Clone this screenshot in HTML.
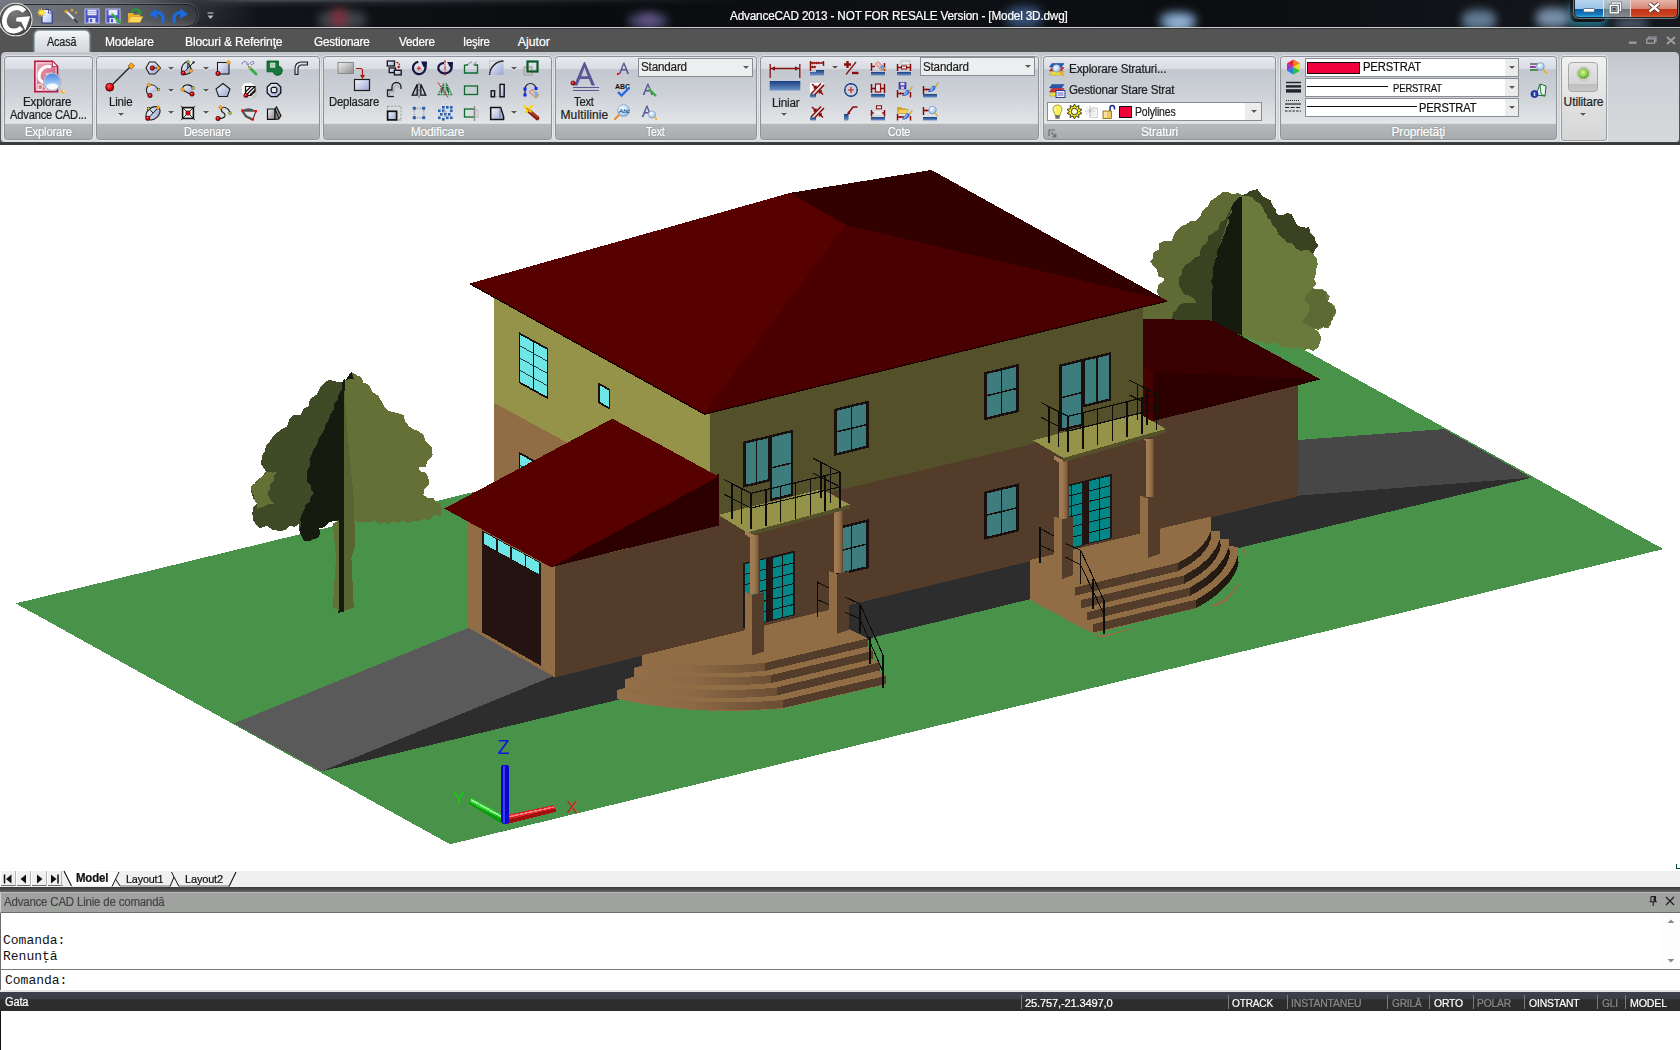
<!DOCTYPE html><html lang="ro"><head><meta charset="utf-8"><title>AdvanceCAD 2013 - NOT FOR RESALE Version - [Model 3D.dwg]</title><style>
*{box-sizing:border-box}
html,body{margin:0;padding:0}
body{width:1680px;height:1050px;overflow:hidden;position:relative;background:#fff;font-family:"Liberation Sans",sans-serif;font-size:12px;color:#1e1e1e}
.abs{position:absolute}
#titlebar{left:0;top:0;width:1680px;height:28px;background:linear-gradient(90deg,#1c1f24 0,#121419 14%,#0a0b0e 35%,#0e1014 55%,#0b0d10 70%,#14181d 100%)}
#titleline{left:0;top:26.6px;width:1680px;height:2px;background:linear-gradient(#b8bcc0,#d8d8d8 50%,#3a3a3a 55%,#3a3a3a)}
#title{left:0;top:8px;width:1798px;text-align:center;color:#fff;font-size:12.3px;white-space:nowrap}
#tabrow{left:0;top:28.5px;width:1680px;height:114px;background:#545454}
.tab{position:absolute;top:36px;color:#fff;font-size:12.2px;white-space:nowrap}
#acttab{left:35px;top:30.5px;width:53.5px;height:22px;border-radius:4px 4px 0 0;background:linear-gradient(#f4f6f8,#e2e5e8 45%,#d3d7db);box-shadow:0 0 2px 1px rgba(200,240,250,.75)}
#ribbon{left:1.2px;top:52px;width:1677.5px;height:89.8px;background:linear-gradient(#c3c7cb,#cdd1d5 30%,#d6d9dc);border-radius:4.5px 4.5px 3px 3px}
#ribline{left:0;top:141.8px;width:1680px;height:3.4px;background:linear-gradient(#4a4a4a,#333 60%,#3e3e3e)}
.panel{position:absolute;top:56px;height:84px;border-radius:3.5px;border:1px solid #8e9297;box-shadow:0 0 0 1px rgba(255,255,255,.45);background:linear-gradient(#e6e9ee 0,#d9dde3 14.2%,#c3c8d0 15.4%,#cdd1d7 45%,#dcdfe2 70%,#e3e5e6 81%,#b6b9bc 81.5%,#a9acaf 100%);overflow:hidden}
.pcap{position:absolute;left:0;right:0;bottom:0;height:15px;line-height:16.5px;text-align:center;color:#fff;font-size:12px;text-shadow:0 0 1px rgba(90,90,90,.6)}
.lbl{position:absolute;white-space:nowrap;font-size:12px;color:#1e1e1e;text-align:center}
.ic{position:absolute;overflow:visible}
.tx{position:absolute;white-space:nowrap;line-height:1.24;transform-origin:0 50%;-webkit-text-stroke:.22px currentColor}
.combo{position:absolute;height:19px;border:1px solid #8a8e94;background:#eceef0;font-size:11.5px;line-height:17px;padding-left:2px;white-space:nowrap}
.combo.w{background:#fff}
.dd{position:absolute;width:0;height:0;border-left:3px solid transparent;border-right:3px solid transparent;border-top:3.5px solid #585858;filter:drop-shadow(0 1px 0 rgba(255,255,255,.9))}
#laytabs{left:0;top:871px;width:1680px;height:17px;background:#f0f0f0}
#darkline{left:0;top:886.8px;width:1680px;height:5.4px;background:linear-gradient(#3a3a3a,#4e4e4e 60%,#6a6a6a)}
#cmdtitle{left:0;top:892px;width:1680px;height:21px;background:#a0a2a0;border-top:1px solid #b8bab8;border-bottom:1px solid #6c6c6c;border-left:1.5px solid #d0d0d0;color:#3a3a3a;font-size:11.4px;line-height:19px;padding-left:4px}
#cmdhist{left:0;top:913px;width:1680px;height:56.5px;background:#fff;border-left:1.5px solid #6c6c6c;border-bottom:1px solid #7a7a7a;font-family:"Liberation Mono",monospace;font-size:13px;color:#111}
#cmdline{left:0;top:969.5px;width:1680px;height:20.5px;background:#fff;border-left:1.5px solid #6c6c6c;font-family:"Liberation Mono",monospace;font-size:13px;color:#111}
#cmdgap{left:0;top:989.7px;width:1680px;height:2.3px;background:#e4e4e4}
#status{left:0;top:991.7px;width:1680px;height:19px;background:linear-gradient(#3e414c,#3a3d46 36%,#2e2e2e 40%,#2c2c2c 100%);color:#fff;font-size:11.4px}
.st{position:absolute;top:3px;white-space:nowrap}
.sep{position:absolute;top:3px;width:1px;height:14px;background:#7a7a7a}
#below{left:0;top:1010.5px;width:1680px;height:40px;background:#fff;border-left:1.5px solid #111}
</style></head><body>
<div id="titlebar" class="abs"></div>
<div class="abs" style="left:0;top:0;width:760px;height:8px;background:linear-gradient(rgba(125,132,145,.6) 0,rgba(90,96,106,.3) 3px,rgba(40,44,50,0) 8px);-webkit-mask-image:linear-gradient(90deg,#000 0,#000 25%,transparent 100%);mask-image:linear-gradient(90deg,#000 0,#000 25%,transparent 100%)"></div>
<div class="abs" style="left:318px;top:10px;width:48px;height:20px;background:#6a6e78;opacity:0.55;filter:blur(5px);border-radius:40%"></div>
<div class="abs" style="left:332px;top:8px;width:14px;height:20px;background:#a02838;opacity:0.7;filter:blur(5px);border-radius:40%"></div>
<div class="abs" style="left:628px;top:13px;width:40px;height:16px;background:#6a6aa0;opacity:0.6;filter:blur(5px);border-radius:40%"></div>
<div class="abs" style="left:640px;top:14px;width:18px;height:12px;background:#8a6ab0;opacity:0.5;filter:blur(5px);border-radius:40%"></div>
<div class="abs" style="left:1006px;top:6px;width:36px;height:22px;background:#5a86c8;opacity:0.55;filter:blur(5px);border-radius:40%"></div>
<div class="abs" style="left:1160px;top:12px;width:36px;height:18px;background:#8ab4e4;opacity:0.8;filter:blur(5px);border-radius:40%"></div>
<div class="abs" style="left:1168px;top:18px;width:22px;height:12px;background:#b8d4f0;opacity:0.6;filter:blur(5px);border-radius:40%"></div>
<div class="abs" style="left:1462px;top:10px;width:34px;height:20px;background:#86a8cc;opacity:0.7;filter:blur(5px);border-radius:40%"></div>
<div class="abs" style="left:1536px;top:8px;width:34px;height:20px;background:#9ab8dc;opacity:0.75;filter:blur(5px);border-radius:40%"></div>
<div class="abs" style="left:1614px;top:19px;width:34px;height:9px;background:#9ab8dc;opacity:0.5;filter:blur(5px);border-radius:40%"></div>
<div class="abs" style="left:0;top:0;width:260px;height:27px;background:linear-gradient(90deg,#6a7077 0,#5c6168 35%,#474b51 55%,#2a2c31 75%,rgba(20,22,26,0) 100%)"></div>
<div class="abs" style="left:0;top:0;width:260px;height:27px;background:linear-gradient(rgba(255,255,255,.08),rgba(0,0,0,.12));-webkit-mask-image:linear-gradient(90deg,#000 0,#000 60%,transparent 100%);mask-image:linear-gradient(90deg,#000 0,#000 60%,transparent 100%)"></div>
<div class="abs" style="left:20px;top:4.8px;width:176.5px;height:21.4px;border-radius:0 10.7px 10.7px 0;background:linear-gradient(rgba(255,255,255,.02),rgba(255,255,255,.10) 70%,rgba(255,255,255,.2));box-shadow:0 0 0 1px rgba(24,26,30,.85), 0 0 0 2px rgba(150,158,168,.28)"></div>
<svg class="ic" style="left:38.0px;top:7.5px" width="16" height="16" viewBox="0 0 16 16"><path d="M4,1.5 H10.5 L14.2,5 V15 H4 Z" fill="url(#gnew)" stroke="#32328a" stroke-width="1.1"/><path d="M10.5,1.5 V5 H14.2" fill="#eef2fc" stroke="#32328a" stroke-width=".8"/><path d="M3.5,0 L4.3,2.4 L6.8,1.2 L5.6,3.6 L8,4.5 L5.6,5.3 L6.6,7.8 L4.3,6.5 L3.4,9 L2.6,6.5 L0.2,7.6 L1.4,5.2 L-1,4.4 L1.5,3.6 L0.4,1.2 L2.8,2.4 Z" fill="#ffe838" stroke="#e8a800" stroke-width=".3"/></svg>
<svg class="ic" style="left:62.5px;top:7.5px" width="16" height="16" viewBox="0 0 16 16"><path d="M4,4 L14,14" stroke="#e8e8e8" stroke-width="2.2" stroke-linecap="round"/><path d="M11.5,11.5 L14,14" stroke="#3c3c3c" stroke-width="2.4" stroke-linecap="round"/><path d="M3,1 l.7,1.8 l1.8,.7 l-1.8,.7 l-.7,1.8 l-.7,-1.8 l-1.8,-.7 l1.8,-.7 z M9,0 l.6,1.5 l1.5,.6 l-1.5,.6 l-.6,1.5 l-.6,-1.5 l-1.5,-.6 l1.5,-.6 z M13,3 l.5,1.3 l1.3,.5 l-1.3,.5 l-.5,1.3 l-.5,-1.3 l-1.3,-.5 l1.3,-.5 z" fill="#f8a820"/></svg>
<svg class="ic" style="left:84.0px;top:7.5px" width="16" height="16" viewBox="0 0 16 16"><rect x="1" y="1" width="14" height="14" fill="#4a52c8" stroke="#c8ccf4" stroke-width=".9"/><rect x="3.5" y="1.8" width="9" height="5.5" fill="#e8e8f8"/><path d="M4,3.5 H12 M4,5.3 H12" stroke="#9aa0d8" stroke-width=".7"/><rect x="4.5" y="10" width="7" height="5" fill="#dcdcf0"/><rect x="6" y="11" width="2" height="3.2" fill="#4a52c8"/></svg>
<svg class="ic" style="left:105.0px;top:7.5px" width="16" height="16" viewBox="0 0 16 16"><rect x="1" y="1" width="14" height="14" fill="#4a52c8" stroke="#c8ccf4" stroke-width=".9"/><rect x="3.5" y="1.8" width="9" height="5.5" fill="#e8e8f8"/><rect x="4.5" y="10" width="7" height="5" fill="#dcdcf0"/><rect x="6" y="11" width="2" height="3.2" fill="#4a52c8"/><path d="M7,6 L15,14.5" stroke="#2fae3c" stroke-width="2.4" stroke-linecap="round"/><path d="M6,5 l2,.5 l-1.4,1.4 z" fill="#e8c890"/></svg>
<svg class="ic" style="left:126.5px;top:7.5px" width="16" height="16" viewBox="0 0 16 16"><path d="M1,5 H6 L7,6.5 H13 V14 H1 Z" fill="#e8b030"/><path d="M3.5,8.5 H16 L13,14.5 H1 Z" fill="#f8d860" stroke="#c89018" stroke-width=".5"/><path d="M5,4.5 C6,0.5 11,0 12.5,3.5" fill="none" stroke="#2a9a3a" stroke-width="2"/><path d="M10,4 L15,2.5 L13.5,7.5 Z" fill="#2a9a3a"/></svg>
<svg class="ic" style="left:149.0px;top:7.5px" width="16" height="16" viewBox="0 0 16 16"><path d="M13,15 C16,8 12,3.5 6,5" fill="none" stroke="#1a6ae0" stroke-width="3.2"/><path d="M0,6.5 L7.5,0.5 L8,10.5 Z" fill="#1a6ae0"/></svg>
<svg class="ic" style="left:171.5px;top:7.5px" width="16" height="16" viewBox="0 0 16 16"><path d="M3,15 C0,8 4,3.5 10,5" fill="none" stroke="#1a6ae0" stroke-width="3.2"/><path d="M16,6.5 L8.5,0.5 L8,10.5 Z" fill="#1a6ae0"/></svg>
<svg class="ic" style="left:206.5px;top:11.5px" width="7" height="8" viewBox="0 0 7 8"><path d="M0.5,1 H6.5" stroke="#b8bcc4" stroke-width="1.2"/><path d="M0.5,3.5 H6.5 L3.5,7 Z" fill="#b8bcc4"/></svg>
<div class="abs" style="left:1574px;top:-1px;width:104px;height:19px;border-radius:0 0 5px 5px;border:1px solid #1a2430;box-shadow:0 0 0 1px rgba(220,230,240,.45);overflow:hidden"><div class="abs" style="left:0;top:0;width:28px;height:18px;background:linear-gradient(#b4d4ee,#9cc4e6 48%,#0a5ea4 52%,#1878c0 80%,#28c8e8)"></div><div class="abs" style="left:28px;top:0;width:26.5px;height:18px;background:linear-gradient(#c4c8cc,#a8acb0 48%,#70747a 52%,#8a8e94);border-left:1px solid #dce4ec"></div><div class="abs" style="left:54.5px;top:0;width:50px;height:18px;background:linear-gradient(#e8b4a8,#d88878 48%,#c43418 52%,#c8401e 80%,#d86838);border-left:1px solid #f0d0c8"></div></div>
<div class="abs" style="left:1570px;top:0;width:36px;height:22px;box-shadow:0 4px 7px 1px rgba(60,200,240,.55);border-radius:0 0 6px 6px;opacity:.9"></div>
<svg class="ic" style="left:1583.0px;top:8.0px" width="12" height="5" viewBox="0 0 12 5"><rect x=".5" y=".5" width="11" height="3.6" rx=".8" fill="#fff" stroke="#4a5a6a" stroke-width=".8"/></svg>
<svg class="ic" style="left:1609.0px;top:2.0px" width="13" height="12" viewBox="0 0 13 12"><rect x="3.5" y="1" width="8" height="7.5" fill="none" stroke="#4a4e54" stroke-width="2.6"/><rect x="3.5" y="1" width="8" height="7.5" fill="none" stroke="#fff" stroke-width="1.5"/><rect x="1.2" y="3.3" width="8" height="7.5" fill="#9a9ea4" stroke="#4a4e54" stroke-width="2.6"/><rect x="1.2" y="3.3" width="8" height="7.5" fill="none" stroke="#fff" stroke-width="1.5"/><rect x="3.8" y="6" width="2.8" height="2.4" fill="#4a4e54"/></svg>
<svg class="ic" style="left:1648.0px;top:2.0px" width="13" height="11" viewBox="0 0 13 11"><path d="M1.5,1.5 L11,9.5 M11,1.5 L1.5,9.5" stroke="#4a2a24" stroke-width="4.2"/><path d="M1.5,1.5 L11,9.5 M11,1.5 L1.5,9.5" stroke="#fff" stroke-width="2.4"/></svg>
<div class="tx" style="left:730.0px;top:8.5px;font-size:12.3px;color:#fff;letter-spacing:-0.18px;transform:scaleX(0.9562);">AdvanceCAD 2013 - NOT FOR RESALE Version - [Model 3D.dwg]</div>
<div id="titleline" class="abs"></div>
<div id="tabrow" class="abs"></div>
<div id="acttab" class="abs"></div>
<div class="tx" style="left:46.7px;top:35.1px;font-size:12.3px;color:#1e1e1e;letter-spacing:-0.18px;transform:scaleX(0.8803);">Acasă</div>
<div class="tx" style="left:105.3px;top:35.1px;font-size:12.3px;color:#fff;letter-spacing:-0.18px;transform:scaleX(0.9773);">Modelare</div>
<div class="tx" style="left:185.3px;top:35.1px;font-size:12.3px;color:#fff;letter-spacing:-0.18px;transform:scaleX(0.9827);">Blocuri &amp; Referinţe</div>
<div class="tx" style="left:314.3px;top:35.1px;font-size:12.3px;color:#fff;letter-spacing:-0.18px;transform:scaleX(0.9544);">Gestionare</div>
<div class="tx" style="left:399.0px;top:35.1px;font-size:12.3px;color:#fff;letter-spacing:-0.18px;transform:scaleX(0.9419);">Vedere</div>
<div class="tx" style="left:463.0px;top:35.1px;font-size:12.3px;color:#fff;letter-spacing:-0.18px;transform:scaleX(0.9208);">Ieşire</div>
<div class="tx" style="left:517.7px;top:35.1px;font-size:12.3px;color:#fff;letter-spacing:0.03px;">Ajutor</div>
<svg class="ic" style="left:1628.5px;top:41.0px" width="8" height="4" viewBox="0 0 8 4"><rect x="0" y=".6" width="7.5" height="2.2" fill="#9aa0a8"/></svg>
<svg class="ic" style="left:1646.0px;top:35.5px" width="11" height="8" viewBox="0 0 11 8"><path d="M2.5,2.8 V1 H10 V5.2 H8.6" fill="none" stroke="#9aa0a8" stroke-width="1.2"/><rect x=".8" y="2.8" width="7.8" height="4.4" fill="none" stroke="#9aa0a8" stroke-width="1.3"/></svg>
<svg class="ic" style="left:1665.5px;top:35.5px" width="10" height="9" viewBox="0 0 10 9"><path d="M1,1 L9,8 M9,1 L1,8" stroke="#9aa0a8" stroke-width="2"/></svg>
<div id="ribbon" class="abs"></div>
<div id="ribline" class="abs"></div>
<svg width="0" height="0" style="position:absolute"><defs>
<linearGradient id="gb" x1="0" y1="0" x2="1" y2="1"><stop offset="0" stop-color="#f6f8fd"/><stop offset="1" stop-color="#98a4d2"/></linearGradient>
<linearGradient id="gbv" x1="0" y1="0" x2="0" y2="1"><stop offset="0" stop-color="#f0f3fb"/><stop offset="1" stop-color="#9ca8d6"/></linearGradient>
<linearGradient id="gdim" x1="0" y1="0" x2="0" y2="1"><stop offset="0" stop-color="#173f80"/><stop offset="1" stop-color="#6d93c6"/></linearGradient>
<linearGradient id="ggray" x1="0" y1="0" x2="1" y2="1"><stop offset="0" stop-color="#f2f2f2"/><stop offset="1" stop-color="#8a8a8a"/></linearGradient>
<radialGradient id="gred" cx=".4" cy=".35" r=".7"><stop offset="0" stop-color="#ff5a5a"/><stop offset=".6" stop-color="#e00010"/><stop offset="1" stop-color="#8a0000"/></radialGradient>
<linearGradient id="gnew" x1="0" y1="0" x2="1" y2="1"><stop offset="0" stop-color="#fff"/><stop offset="1" stop-color="#a8c4ec"/></linearGradient><linearGradient id="gpg" x1="0" y1="0" x2="1" y2="1"><stop offset="0" stop-color="#eeb8c6"/><stop offset=".5" stop-color="#d87890"/><stop offset="1" stop-color="#c4486a"/></linearGradient><linearGradient id="glens2" x1="0" y1="0" x2="0" y2="1"><stop offset="0" stop-color="#4a84e4"/><stop offset=".5" stop-color="#8cbcf4"/><stop offset="1" stop-color="#e8f2fe"/></linearGradient><radialGradient id="gapp" cx=".45" cy=".25" r=".85"><stop offset="0" stop-color="#7a7a7a"/><stop offset=".55" stop-color="#5c5c5c"/><stop offset="1" stop-color="#3c3c3c"/></radialGradient>
<radialGradient id="gled" cx=".45" cy=".4" r=".6"><stop offset="0" stop-color="#d8f5a0"/><stop offset=".6" stop-color="#8fd04a"/><stop offset="1" stop-color="#5a9a2a"/></radialGradient>
<radialGradient id="glens" cx=".4" cy=".35" r=".7"><stop offset="0" stop-color="#fff"/><stop offset=".7" stop-color="#a8d0f4"/><stop offset="1" stop-color="#5a94d8"/></radialGradient>
</defs></svg>
<div class="panel" style="left:4px;width:89px"></div><div class="tx" style="left:24.8px;top:125.4px;font-size:12px;color:#fff;letter-spacing:-0.18px;transform:scaleX(0.9450);text-shadow:0 0 1.5px rgba(80,80,80,.55);">Explorare</div>
<div class="panel" style="left:96px;width:224px"></div><div class="tx" style="left:184.3px;top:125.4px;font-size:12px;color:#fff;letter-spacing:-0.18px;transform:scaleX(0.9232);text-shadow:0 0 1.5px rgba(80,80,80,.55);">Desenare</div>
<div class="panel" style="left:323px;width:228.5px"></div><div class="tx" style="left:410.7px;top:125.4px;font-size:12px;color:#fff;letter-spacing:-0.17px;transform:scaleX(1.0000);text-shadow:0 0 1.5px rgba(80,80,80,.55);">Modificare</div>
<div class="panel" style="left:555px;width:202px"></div><div class="tx" style="left:645.7px;top:125.4px;font-size:12px;color:#fff;letter-spacing:-0.18px;transform:scaleX(0.8738);text-shadow:0 0 1.5px rgba(80,80,80,.55);">Text</div>
<div class="panel" style="left:760px;width:278.5px"></div><div class="tx" style="left:888.0px;top:125.4px;font-size:12px;color:#fff;letter-spacing:-0.18px;transform:scaleX(0.8934);text-shadow:0 0 1.5px rgba(80,80,80,.55);">Cote</div>
<div class="panel" style="left:1042.5px;width:233.5px"></div><div class="tx" style="left:1140.6px;top:125.4px;font-size:12px;color:#fff;letter-spacing:-0.18px;transform:scaleX(0.9937);text-shadow:0 0 1.5px rgba(80,80,80,.55);">Straturi</div>
<div class="panel" style="left:1279.5px;width:277.5px"></div><div class="tx" style="left:1391.4px;top:125.4px;font-size:12px;color:#fff;letter-spacing:-0.10px;transform:scaleX(1.0000);text-shadow:0 0 1.5px rgba(80,80,80,.55);">Proprietăţi</div>
<div class="abs" style="left:1561px;top:55.5px;width:45.5px;height:85px;border:1px solid #9a9ea3;border-radius:3px;background:linear-gradient(#f2f2f2,#e2e2e2 50%,#d6d6d6);box-shadow:0 0 0 1px rgba(255,255,255,.5)"></div>
<div class="abs" style="left:1567.5px;top:61.5px;width:30.5px;height:30px;border:1px solid #a8a8a8;border-radius:4px;background:linear-gradient(#e8e8e8,#d4d4d4 74%,#bebebe 75%,#c8c8c8)"></div>
<svg class="ic" style="left:1575.5px;top:65.5px" width="15" height="15" viewBox="0 0 15 15"><circle cx="7.5" cy="7.5" r="6.8" fill="#e8e8e8" stroke="#b4b4b4" stroke-width=".8"/><circle cx="7.5" cy="7.5" r="5.3" fill="url(#gled)" stroke="#6a9a3a" stroke-width=".5"/></svg>
<div class="tx" style="left:1563.6px;top:95.1px;font-size:12px;color:#1e1e1e;letter-spacing:-0.10px;transform:scaleX(1.0000);">Utilitare</div>
<div class="dd" style="left:1579.5px;top:113px"></div>
<svg class="ic" style="left:33.0px;top:59.5px" width="34" height="36" viewBox="0 0 34 36"><path d="M1.8,1.3 H19.5 L24.6,6.4 V31.8 H1.8 Z" fill="url(#gpg)" stroke="#b01c44" stroke-width="1.5"/><path d="M3.4,3 H19 L23,7 V30.2 H3.4 Z" fill="none" stroke="#fbe8ee" stroke-width=".8"/><path d="M19.5,1.3 V6.4 H24.6 Z" fill="#fff" stroke="#b01c44" stroke-width=".8"/><path d="M18,7 C12.5,5 6.5,9 6,15.5 C5.7,20 8.5,22.5 12,22.5" fill="none" stroke="#fff" stroke-width="3.2"/><path d="M12.5,13.8 L19,12.2 L16,20 Z" fill="#fff"/><text x="4" y="29.6" font-family="Liberation Sans,sans-serif" font-size="9" fill="#fff">DW</text><path d="M24.5,26.5 L29.5,31" stroke="#c0c4cc" stroke-width="2.6" stroke-linecap="round"/><circle cx="30.2" cy="31.6" r="1.9" fill="#f8a020"/><circle cx="30.8" cy="31" r=".9" fill="#fff"/><circle cx="19.3" cy="21.8" r="8.6" fill="url(#glens2)" stroke="#b4b8c4" stroke-width="1.3"/><ellipse cx="19.3" cy="26.3" rx="5.6" ry="3" fill="#fff" opacity=".85"/></svg>
<div class="tx" style="left:23.3px;top:95.4px;font-size:12px;color:#1e1e1e;letter-spacing:-0.18px;transform:scaleX(0.9732);">Explorare</div>
<div class="tx" style="left:10.0px;top:108.1px;font-size:12px;color:#1e1e1e;letter-spacing:-0.18px;transform:scaleX(0.9258);">Advance CAD...</div>
<svg class="ic" style="left:104.0px;top:61.0px" width="32" height="32" viewBox="0 0 32 32"><path d="M6,26 L27,5" stroke="#1c1c1c" stroke-width="1.2"/><circle cx="5.7" cy="26.2" r="4" fill="url(#gred)" stroke="#4a0000" stroke-width=".8"/><path d="M27.3,1.8 L30.5,5 L27.3,8.2 L24.1,5 Z" fill="#f7a824" stroke="#8a4a00" stroke-width=".7"/></svg>
<div class="tx" style="left:109.3px;top:95.3px;font-size:12px;color:#1e1e1e;letter-spacing:-0.18px;transform:scaleX(0.9570);">Linie</div>
<div class="dd" style="left:117.6px;top:113px"></div>
<svg class="ic" style="left:145.0px;top:60.2px" width="16" height="16" viewBox="0 0 16 16"><path d="M1,8 L4.4,2 H10 L15.5,8 L10,14 H4.4 Z" fill="url(#gb)" stroke="#1c1c1c" stroke-width="1.1"/><path d="M7,8 H13" stroke="#1c1c1c" stroke-width="1"/><rect x="5.3" y="6.0" width="4.0" height="4.0" rx="1.4" fill="url(#gred)" stroke="#3a0000" stroke-width=".8"/><path d="M13.3,6 l2,2 l-2,2 l-2,-2 z" fill="#f7a824" stroke="#a05a00" stroke-width=".4"/></svg>
<svg class="ic" style="left:179.5px;top:60.2px" width="16" height="16" viewBox="0 0 16 16"><path d="M1.5,9.5 A9,9 0 0 1 7.5,1.5 L12,10.5 A9,9 0 0 1 5.5,14.5 L2.5,14 Z" fill="url(#gb)" stroke="#1c1c1c" stroke-width="1.1"/><path d="M8,2 L7.7,8 M13.3,2.5 L5.5,11" fill="none" stroke="#1c1c1c" stroke-width="1"/><rect x="6.9" y="0.8999999999999999" width="2.2" height="2.2" fill="#f4e61e" stroke="#222" stroke-width=".5"/><circle cx="13.6" cy="2.4" r="1.1" fill="#111"/><path d="M11,8.8 l2.2,2.2 l-2.2,2.2 l-2.2,-2.2 z" fill="#f7a824" stroke="#a05a00" stroke-width=".4"/><rect x="1.2" y="11.0" width="4.0" height="4.0" rx="1.4" fill="url(#gred)" stroke="#3a0000" stroke-width=".8"/></svg>
<svg class="ic" style="left:215.0px;top:60.2px" width="16" height="16" viewBox="0 0 16 16"><rect x="2.5" y="2.5" width="11.5" height="11.5" fill="url(#gb)" stroke="#1c1c1c" stroke-width="1.1"/><rect x="0.9999999999999998" y="11.5" width="4.0" height="4.0" rx="1.4" fill="url(#gred)" stroke="#3a0000" stroke-width=".8"/><path d="M13.5,0.2999999999999998 l2.2,2.2 l-2.2,2.2 l-2.2,-2.2 z" fill="#f7a824" stroke="#a05a00" stroke-width=".4"/></svg>
<svg class="ic" style="left:241.0px;top:60.2px" width="16" height="16" viewBox="0 0 16 16"><path d="M1,4.3 C1.5,1.5 4,1 5.5,2 C7,3 4.5,4.8 6.5,4.6 C9,4.2 10,1 12.5,1.8 C14,2.4 12.5,4.8 10,4.6" fill="none" stroke="#4c4ca4" stroke-width=".9" stroke-dasharray="2.2 .7"/><path d="M9.5,8.5 L15,14" stroke="#2fae3c" stroke-width="2.8" stroke-linecap="round"/><path d="M9.2,9 L10.6,7.6" stroke="#86d886" stroke-width="1"/><path d="M7,6 l3.2,1.2 l-2,2 z" fill="#e8c070" stroke="#8a6a30" stroke-width=".4"/><path d="M7,6 l1.2,.5 l-.7,.7 z" fill="#333"/></svg>
<svg class="ic" style="left:266.3px;top:60.2px" width="16" height="16" viewBox="0 0 16 16"><path d="M1,1 H12.5 V6.2 A4.6,4.6 0 1 1 7.2,11.8 H1 Z" fill="#16783a" stroke="#0a5a26" stroke-width=".9"/><rect x="4.6" y="3.2" width="4.2" height="4" fill="#a8c8b0" stroke="#d8ecd8" stroke-width=".9"/></svg>
<svg class="ic" style="left:293.0px;top:60.2px" width="16" height="16" viewBox="0 0 16 16"><path d="M2,14.5 V8 A6,6 0 0 1 8,2 H14.5 V5 H8.5 A3.5,3.5 0 0 0 5,8.5 V14.5 Z" fill="url(#gb)" stroke="#1c1c1c" stroke-width="1.1"/></svg>
<div class="dd" style="left:167.6px;top:66.7px"></div>
<div class="dd" style="left:202.5px;top:66.7px"></div>
<svg class="ic" style="left:145.0px;top:82.3px" width="16" height="16" viewBox="0 0 16 16"><path d="M3.5,13 A6.5,6.5 0 0 1 4,3 A8,8 0 0 1 13,7.5 L5,13 Z" fill="url(#gb)" stroke="none"/><path d="M3.5,13 A6.5,6.5 0 0 1 4,3 A8,8 0 0 1 13,7.5" fill="none" stroke="#1c1c1c" stroke-width="1.1"/><path d="M4,0.7999999999999998 l2.2,2.2 l-2.2,2.2 l-2.2,-2.2 z" fill="#f7a824" stroke="#a05a00" stroke-width=".4"/><rect x="12.4" y="6.4" width="2.2" height="2.2" fill="#f4e61e" stroke="#222" stroke-width=".5"/><rect x="3.0" y="11.5" width="4.0" height="4.0" rx="1.4" fill="url(#gred)" stroke="#3a0000" stroke-width=".8"/></svg>
<svg class="ic" style="left:179.5px;top:82.3px" width="16" height="16" viewBox="0 0 16 16"><path d="M2,7 A6,6 0 0 1 13,6 L12,12 Z" fill="url(#gb)" stroke="none"/><path d="M2,7 A6,6 0 0 1 13,6 M2.5,8 L11,12.5" fill="none" stroke="#1c1c1c" stroke-width="1.1"/><path d="M2.5,5.3 l2.2,2.2 l-2.2,2.2 l-2.2,-2.2 z" fill="#f7a824" stroke="#a05a00" stroke-width=".4"/><rect x="11.9" y="4.9" width="2.2" height="2.2" fill="#f4e61e" stroke="#222" stroke-width=".5"/><rect x="10.0" y="10.0" width="4.0" height="4.0" rx="1.4" fill="url(#gred)" stroke="#3a0000" stroke-width=".8"/></svg>
<svg class="ic" style="left:215.0px;top:82.3px" width="16" height="16" viewBox="0 0 16 16"><path d="M8,1.5 L15,7 L12.3,14.5 H3.7 L1,7 Z" fill="url(#gb)" stroke="#1c1c1c" stroke-width="1.1"/></svg>
<svg class="ic" style="left:241.0px;top:82.3px" width="16" height="16" viewBox="0 0 16 16"><path d="M6,15.5 H16 V5 L13,5 V12 Z" fill="#c4c4c4"/><path d="M1,4 L4,1 H11 L14,4 V11 L11,14.5 H4 L1,11 Z" fill="#f8f8f8"/><path d="M4.5,4.5 H14 V9.5 L10,13.5 H4.5 Z" fill="#fff" stroke="#111" stroke-width="1.2"/><path d="M5,9.5 L10,4.5 M5.5,12.8 L13.5,4.8 M9,13 L14,8" stroke="#111" stroke-width="1.3"/><rect x="3.0" y="11.3" width="4.0" height="4.0" rx="1.4" fill="url(#gred)" stroke="#3a0000" stroke-width=".8"/></svg>
<svg class="ic" style="left:266.3px;top:82.3px" width="16" height="16" viewBox="0 0 16 16"><path d="M5,1.3 H11 L14.8,5 V11 L11,14.7 H5 L1.2,11 V5 Z" fill="url(#gb)" stroke="#111" stroke-width="1.3"/><path d="M6.3,5.3 H9.7 L10.8,6.4 V9.6 L9.7,10.7 H6.3 L5.2,9.6 V6.4 Z" fill="#e6e8ec" stroke="#111" stroke-width="1.2"/></svg>
<div class="dd" style="left:167.6px;top:88.8px"></div>
<div class="dd" style="left:202.5px;top:88.8px"></div>
<svg class="ic" style="left:145.0px;top:104.9px" width="16" height="16" viewBox="0 0 16 16"><ellipse cx="8" cy="8.3" rx="8" ry="5.6" transform="rotate(-40 8 8.3)" fill="url(#gb)" stroke="#1c1c1c" stroke-width="1.1"/><path d="M3,13.5 L13,3 M4,3.5 L8,8" stroke="#1c1c1c" stroke-width="1"/><rect x="2.6" y="2.6999999999999997" width="2.2" height="2.2" fill="#f4e61e" stroke="#222" stroke-width=".5"/><rect x="0.7999999999999996" y="11.3" width="4.0" height="4.0" rx="1.4" fill="url(#gred)" stroke="#3a0000" stroke-width=".8"/><path d="M13,0.3999999999999999 l2.2,2.2 l-2.2,2.2 l-2.2,-2.2 z" fill="#f7a824" stroke="#a05a00" stroke-width=".4"/></svg>
<svg class="ic" style="left:179.5px;top:104.9px" width="16" height="16" viewBox="0 0 16 16"><rect x="2.6" y="2.6" width="10.8" height="10.8" fill="#f6f6f6" stroke="#111" stroke-width="1.6"/><path d="M.8,.8 L15.2,15.2 M15.2,.8 L.8,15.2" stroke="#1c1c1c" stroke-width=".9"/><rect x="6" y="6" width="4" height="4" rx=".8" fill="#f0000c" stroke="#5a0000" stroke-width=".8"/></svg>
<svg class="ic" style="left:215.0px;top:104.9px" width="16" height="16" viewBox="0 0 16 16"><path d="M3,13.5 C10,14 12,10 8,7.5 C4.5,5 7,1.5 10,2.5 C13,3.5 14.5,5 15,8" fill="none" stroke="#1c1c1c" stroke-width="1.1"/><rect x="0.9999999999999998" y="11.5" width="4.0" height="4.0" rx="1.4" fill="url(#gred)" stroke="#3a0000" stroke-width=".8"/><path d="M5.5,0.2999999999999998 l2.2,2.2 l-2.2,2.2 l-2.2,-2.2 z" fill="#f7a824" stroke="#a05a00" stroke-width=".4"/><rect x="13.9" y="6.9" width="2.2" height="2.2" fill="#f4e61e" stroke="#222" stroke-width=".5"/></svg>
<svg class="ic" style="left:241.0px;top:104.9px" width="16" height="16" viewBox="0 0 16 16"><g transform="translate(0,1.8)"><path d="M1,3.8 L8,1.2 L15,4.3 L11.8,12.5 Z" fill="#e2e2e2"/><path d="M1.5,3.5 Q8,-1 14.8,4 L13.5,5 H3 Z" fill="#505050"/><path d="M1.3,4 L5,9.5 L11.5,12.6" fill="none" stroke="#505050" stroke-width="2.2"/><path d="M14.8,4.5 L12,12.4" stroke="#1c1c1c" stroke-width="1"/><rect x=".2" y="2.5" width="2.4" height="2.4" fill="#f00"/><rect x="13.6" y="3.2" width="2.4" height="2.4" fill="#f00"/><rect x="10.6" y="11.4" width="2.4" height="2.4" fill="#f00"/></g></svg>
<svg class="ic" style="left:266.3px;top:104.9px" width="16" height="16" viewBox="0 0 16 16"><path d="M1.5,4 H9 V14.3 H1.5 Z" fill="url(#ggray)" stroke="#111" stroke-width="1.2"/><path d="M9,4 L10.5,1.8 L15,10.8 L12.5,14.3 H9 Z" fill="#8a8a8a" stroke="#111" stroke-width="1.1"/><path d="M9,4 L13,13.5" stroke="#111" stroke-width="1"/></svg>
<div class="dd" style="left:167.6px;top:111.4px"></div>
<div class="dd" style="left:202.5px;top:111.4px"></div>
<svg class="ic" style="left:336.0px;top:61.0px" width="36" height="32" viewBox="0 0 36 32"><rect x="2" y="1.5" width="15.5" height="11" fill="url(#ggray)" stroke="#8a8a8a" stroke-width="1"/><rect x="18.5" y="18.5" width="15" height="11" fill="url(#gb)" stroke="#1c1c1c" stroke-width="1.2"/><path d="M20,7.5 H24.5 Q26.5,7.5 26.5,9.5 V15" fill="none" stroke="#b01414" stroke-width="1.2"/><path d="M24,14 H29 L26.5,18 Z" fill="#b01414"/></svg>
<div class="tx" style="left:329.3px;top:95.3px;font-size:12px;color:#1e1e1e;letter-spacing:-0.18px;transform:scaleX(0.9421);">Deplasare</div>
<svg class="ic" style="left:385.6px;top:60.2px" width="16" height="16" viewBox="0 0 16 16"><rect x="1.3" y="1" width="7.2" height="5" fill="url(#gb)" stroke="#111" stroke-width="1.3"/><rect x="3.2" y="8" width="6.3" height="4.6" fill="url(#gb)" stroke="#111" stroke-width="1.3"/><rect x="8.4" y="10.3" width="6.8" height="4.6" fill="url(#gb)" stroke="#111" stroke-width="1.3"/><path d="M10.3,2.3 C13.5,2.8 14,5.5 13,7.3" fill="none" stroke="#c01414" stroke-width="1.2" stroke-dasharray="2 .7"/><path d="M10.8,6.2 L12.6,8.8 L14.4,6.3 Z" fill="#c01414"/></svg>
<svg class="ic" style="left:410.5px;top:60.2px" width="16" height="16" viewBox="0 0 16 16"><path d="M7.3,1.8 A6.2,6.2 0 1 0 14.3,7.4" stroke="#141446" stroke-width="2.2" fill="none"/><path d="M10,1.6 H16 L15.6,8.4 L12.6,7 Z" fill="#141446"/><path d="M5.8,8.2 H10 M7.9,6.2 V10.2" stroke="#d01818" stroke-width="1.1"/></svg>
<svg class="ic" style="left:436.6px;top:60.2px" width="16" height="16" viewBox="0 0 16 16"><path d="M7,2.8 A6.6,5.3 0 1 0 14.4,7.4" stroke="#141446" stroke-width="2.2" fill="none"/><path d="M10.2,2 H16 L15.6,8.4 L12.8,7 Z" fill="#141446"/><path d="M8,0 V16" stroke="#c01010" stroke-width="1.1" stroke-dasharray="3.2 1 1 1"/></svg>
<svg class="ic" style="left:462.6px;top:60.2px" width="16" height="16" viewBox="0 0 16 16"><path d="M1.5,5 V13 H14.5 V5 H11 M1.5,5 H5" stroke="#0c6a2c" stroke-width="1.3" fill="none"/><path d="M5,4.5 L9,1.5 M10,5 L13.5,2" stroke="#a0a0a0" stroke-width="1.2"/></svg>
<svg class="ic" style="left:489.0px;top:60.2px" width="16" height="16" viewBox="0 0 16 16"><path d="M0,15 A15,15 0 0 1 14.5,1 V15 Z" fill="url(#gb)"/><path d="M.5,15 A14.5,14.5 0 0 1 14.5,1" fill="none" stroke="#1c1c1c" stroke-width="1.4"/><path d="M.5,1 V14 M.5,1 H13" stroke="#9a9a9a" stroke-width=".8" stroke-dasharray="1 1"/></svg>
<svg class="ic" style="left:523.3px;top:60.2px" width="16" height="16" viewBox="0 0 16 16"><rect x="1" y="7" width="8" height="8" fill="#c8c8c8" stroke="#9a9a9a"/><rect x="4.5" y="1.5" width="10" height="10" fill="none" stroke="#0c5a28" stroke-width="2.2"/></svg>
<svg class="ic" style="left:385.6px;top:82.3px" width="16" height="16" viewBox="0 0 16 16"><path d="M1.5,14.5 V8 H6 V5 A4.5,4.5 0 0 1 15,5 V7" fill="none" stroke="#1c1c1c" stroke-width="1.3"/><path d="M3,14.5 H8 M3.5,13 V10 H8 V6 A2.5,2.5 0 0 1 13,6" fill="none" stroke="#a0a0a0" stroke-width="1"/><path d="M1.5,14.5 H8" stroke="#1c1c1c" stroke-width="1.3"/></svg>
<svg class="ic" style="left:410.5px;top:82.3px" width="16" height="16" viewBox="0 0 16 16"><path d="M6.2,2.2 V13.2 H1.2 Z" fill="url(#gb)" stroke="#111" stroke-width="1.3"/><path d="M9.8,2.2 V13.2 H14.8 Z" fill="url(#gb)" stroke="#111" stroke-width="1.3"/><path d="M8,.5 V15.8" stroke="#333" stroke-width=".8" stroke-dasharray="3.2 1 1 1"/></svg>
<svg class="ic" style="left:436.6px;top:82.3px" width="16" height="16" viewBox="0 0 16 16"><path d="M6.6,1.5 L7.2,12.8 H1.2 Z" fill="#dfe6f4" stroke="#0c6a2c" stroke-width="1.1" stroke-dasharray="1.2 .5"/><path d="M9.4,1.5 L8.8,12.8 H14.8 Z" fill="#dfe6f4" stroke="#0c6a2c" stroke-width="1.1" stroke-dasharray="1.2 .5"/><path d="M4.2,11.5 L6,5 M11.8,11.5 L10,5" stroke="#0c6a2c" stroke-width="1.6"/><path d="M1,.5 L11,15.5" stroke="#c01010" stroke-width="1" stroke-dasharray="2.5 .8"/></svg>
<svg class="ic" style="left:462.6px;top:82.3px" width="16" height="16" viewBox="0 0 16 16"><rect x="1.5" y="4" width="13" height="8.5" stroke="#0c6a2c" stroke-width="1.3" fill="none"/></svg>
<svg class="ic" style="left:489.0px;top:82.3px" width="16" height="16" viewBox="0 0 16 16"><rect x="2.2" y="8.8" width="3.4" height="6" fill="url(#gb)" stroke="#111" stroke-width="1.4"/><rect x="11" y="2.4" width="4.2" height="12.4" fill="url(#gb)" stroke="#111" stroke-width="1.4"/><path d="M7,7.5 L9.5,4.5 M7,14.5 H10" stroke="#a0a0a0" stroke-width=".9" stroke-dasharray="1 1"/></svg>
<svg class="ic" style="left:523.3px;top:82.3px" width="16" height="16" viewBox="0 0 16 16"><path d="M2,12 V7 A5.5,5.5 0 0 1 13,7" fill="none" stroke="#1c1c1c" stroke-width="1.2"/><rect x="0.5" y="5.5" width="3" height="3" fill="#1020f0"/><rect x="0.5" y="11.5" width="3" height="3" fill="#1020f0"/><rect x="11.5" y="5" width="3" height="3" fill="#1020f0"/><path d="M6,10 L9,7.5 L16,13 L13,16 Z" fill="#f4b8b0" stroke="#8a5a5a" stroke-width=".6"/><path d="M11,11.5 L14,9.5 L16,13 L13,16 Z" fill="#7ab0e8"/><path d="M13.5,15.5 L16,13" stroke="#e8b020" stroke-width="1.2"/></svg>
<svg class="ic" style="left:385.6px;top:104.9px" width="16" height="16" viewBox="0 0 16 16"><path d="M1.5,1.2 H15 V15" fill="none" stroke="#9a9a9a" stroke-width="1" stroke-dasharray="2.2 1.3"/><path d="M1.5,1.2 V6" stroke="#9a9a9a" stroke-dasharray="2.2 1.3"/><path d="M10.5,15 H15" stroke="#9a9a9a"/><rect x="1.6" y="6.3" width="9" height="8.6" fill="url(#gb)" stroke="#111" stroke-width="1.7"/></svg>
<svg class="ic" style="left:410.5px;top:104.9px" width="16" height="16" viewBox="0 0 16 16"><path d="M5.5,3.2 H10.5 M5.5,12.8 H10.5 M3.2,5.5 V10.5 M12.8,5.5 V10.5" fill="none" stroke="#8a9ab8" stroke-width="1" stroke-dasharray="2 1.2"/><rect x="1.8" y="1.8" width="3" height="3" fill="#2a5cac"/><rect x="1.8" y="11.2" width="3" height="3" fill="#2a5cac"/><rect x="11.2" y="1.8" width="3" height="3" fill="#2a5cac"/><rect x="11.2" y="11.2" width="3" height="3" fill="#2a5cac"/></svg>
<svg class="ic" style="left:436.6px;top:104.9px" width="16" height="16" viewBox="0 0 16 16"><rect x="5" y="1" width="2.6" height="2.6" fill="#2860b4"/><rect x="9" y="1" width="2.6" height="2.6" fill="#2860b4"/><rect x="13" y="1" width="2.6" height="2.6" fill="#2860b4"/><rect x="1" y="4.5" width="2.6" height="2.6" fill="#2860b4"/><rect x="5" y="4.5" width="2.6" height="2.6" fill="#2860b4"/><rect x="13" y="4.5" width="2.6" height="2.6" fill="#2860b4"/><rect x="3" y="8" width="2.6" height="2.6" fill="#2860b4"/><rect x="7" y="8" width="2.6" height="2.6" fill="#2860b4"/><rect x="11" y="8" width="2.6" height="2.6" fill="#2860b4"/><rect x="1" y="11.5" width="2.6" height="2.6" fill="#2860b4"/><rect x="9" y="11.5" width="2.6" height="2.6" fill="#2860b4"/><rect x="13" y="11.5" width="2.6" height="2.6" fill="#2860b4"/><rect x="5" y="13" width="2.6" height="2.6" fill="#2860b4"/><path d="M6,6 h4 l-2,2.5 z M6,12 h4 l-2,-2.5 z" fill="#a8b0bc"/></svg>
<svg class="ic" style="left:462.6px;top:104.9px" width="16" height="16" viewBox="0 0 16 16"><rect x="1.5" y="4" width="10" height="8" stroke="#0c6a2c" stroke-width="1.3" fill="none"/><path d="M11.5,1 V16" stroke="#8a8a8a" stroke-width="1.3"/><path d="M12,5 H15 V12 H12" fill="none" stroke="#b8b8b8"/></svg>
<svg class="ic" style="left:489.0px;top:104.9px" width="16" height="16" viewBox="0 0 16 16"><path d="M1.7,2.6 H11.6 L14.6,11.5 V14.4 H1.7 Z" fill="url(#gb)" stroke="#111" stroke-width="1.5"/><path d="M11,3 V14" stroke="#7a7a8a" stroke-width="1"/></svg>
<svg class="ic" style="left:523.3px;top:104.9px" width="16" height="16" viewBox="0 0 16 16"><path d="M6.5,6.5 L14.3,13.2" stroke="#8a1a0c" stroke-width="4.2" stroke-linecap="round"/><path d="M6.8,6 L14,12" stroke="#c84a38" stroke-width="1.3" stroke-linecap="round" stroke-dasharray="2 1"/><path d="M1,1 L7.5,6.5 M9,.8 L3,7" stroke="#f8dc00" stroke-width="2.2" stroke-linecap="round"/><path d="M3.5,3.2 L6.3,5.5" stroke="#f08000" stroke-width="1.6"/></svg>
<div class="dd" style="left:511.4px;top:67px"></div>
<div class="dd" style="left:511.4px;top:110.5px"></div>
<svg class="ic" style="left:569.0px;top:60.0px" width="32" height="32" viewBox="0 0 32 32"><path d="M16,2 L26,25.5 H22.6 L20,19 H11 L8.4,25.5 H5 L15,2 Z M12.2,16.2 H18.8 L15.5,7.5 Z" fill="#5a5696" fill-rule="evenodd"/><path d="M4,27.5 H30 M4,30.5 H30" stroke="#5a5696" stroke-width="1.1"/><circle cx="4" cy="23" r="2.1" fill="url(#gred)" stroke="#4a0000" stroke-width=".7"/></svg>
<div class="tx" style="left:574.2px;top:95.3px;font-size:12px;color:#1e1e1e;letter-spacing:-0.18px;transform:scaleX(0.9302);">Text</div>
<div class="tx" style="left:560.5px;top:108.3px;font-size:12px;color:#1e1e1e;letter-spacing:0.12px;">Multilinie</div>
<svg class="ic" style="left:614.5px;top:60.5px" width="16" height="16" viewBox="0 0 16 16"><g transform="translate(2,0) scale(.92)"><path d="M8,1.5 L13.2,14 H11.2 L9.8,10.4 H5.2 L3.8,14 H1.8 L7,1.5 Z M5.8,8.8 H9.2 L7.5,4.2 Z" fill="#5a5696" fill-rule="evenodd"/></g><circle cx="3" cy="13" r="1.2" fill="#f01010"/></svg>
<svg class="ic" style="left:614.5px;top:82.0px" width="16" height="16" viewBox="0 0 16 16"><text x="0" y="6.5" font-family="Liberation Sans,sans-serif" font-size="7" font-weight="bold" fill="#111">ABC</text><path d="M3,10 L6.5,13.5 L14.5,5.5" fill="none" stroke="#2a6ae0" stroke-width="2.4"/></svg>
<svg class="ic" style="left:614.0px;top:104.0px" width="16" height="16" viewBox="0 0 16 16"><circle cx="9.5" cy="6.5" r="6" fill="url(#glens)" stroke="#8aa8d0" stroke-width=".8"/><text x="5" y="8.8" font-family="Liberation Sans,sans-serif" font-size="6.2" font-style="italic" fill="#111">Abc</text><path d="M5,11 L1,15" stroke="#e8902a" stroke-width="2.2" stroke-linecap="round"/></svg>
<svg class="ic" style="left:640.5px;top:82.0px" width="16" height="16" viewBox="0 0 16 16"><g transform="translate(0,0) scale(.92)"><path d="M8,1.5 L13.2,14 H11.2 L9.8,10.4 H5.2 L3.8,14 H1.8 L7,1.5 Z M5.8,8.8 H9.2 L7.5,4.2 Z" fill="#5a5696" fill-rule="evenodd"/></g><path d="M8,7 L14.5,13.5" stroke="#2fae3c" stroke-width="2.2" stroke-linecap="round"/><path d="M7,6 l2,.6 l-1.3,1.3 z" fill="#e8c890"/></svg>
<svg class="ic" style="left:640.5px;top:104.0px" width="16" height="16" viewBox="0 0 16 16"><g transform="translate(-1,0) scale(.92)"><path d="M8,1.5 L13.2,14 H11.2 L9.8,10.4 H5.2 L3.8,14 H1.8 L7,1.5 Z M5.8,8.8 H9.2 L7.5,4.2 Z" fill="#5a5696" fill-rule="evenodd"/></g><circle cx="11" cy="10.5" r="3.6" fill="url(#glens)" stroke="#8aa8d0" stroke-width=".8"/><path d="M13.6,13.2 L15.5,15.2" stroke="#e8b030" stroke-width="1.6" stroke-linecap="round"/></svg>
<div class="combo" style="left:638px;top:57.5px;width:115px"></div>
<div class="tx" style="left:640.6px;top:60.3px;font-size:12px;color:#1e1e1e;letter-spacing:-0.18px;transform:scaleX(0.9712);">Standard</div>
<div class="dd" style="left:742.5px;top:65.5px"></div>
<svg class="ic" style="left:768.0px;top:62.0px" width="34" height="30" viewBox="0 0 34 30"><path d="M2.2,2 V16 M31.8,2 V16 M2.2,6.5 H31.8" stroke="#8a1010" stroke-width="1.3" fill="none"/><path d="M3,6.5 l4,-2.2 v4.4 z M31,6.5 l-4,-2.2 v4.4 z" fill="#8a1010"/><rect x="1.7" y="19" width="30.6" height="9.5" fill="url(#gdim)"/></svg>
<div class="tx" style="left:771.5px;top:95.6px;font-size:12px;color:#1e1e1e;letter-spacing:-0.18px;transform:scaleX(0.9728);">Liniar</div>
<div class="dd" style="left:781.2px;top:113px"></div>
<svg class="ic" style="left:808.6px;top:60.2px" width="16" height="16" viewBox="0 0 16 16"><path d="M1.5,1 V11 M14.5,1 V6 M1.5,3 H14.5 M1.5,7 H7" stroke="#880808" stroke-width="1.45" fill="none"/><path d="M3,3 h1 M5,3 h1 M7,3 h1 M9,3 h1 M3,7 h1 M5,7 h1" stroke="#8a1010" stroke-width="2.4" stroke-dasharray=".8 1.2"/><path d="M1,15.5 V12 H7 V10 H15 V15.5 Z" fill="url(#gdim)"/></svg>
<svg class="ic" style="left:842.6px;top:60.2px" width="16" height="16" viewBox="0 0 16 16"><path d="M1,4.5 H8 M4.5,1 V8" stroke="#8a1010" stroke-width="2.4"/><path d="M9,13 H15.5" stroke="#8a1010" stroke-width="2.4"/><path d="M3,14.5 L13,2" stroke="#8a1010" stroke-width="1.3"/></svg>
<svg class="ic" style="left:870.2px;top:60.2px" width="16" height="16" viewBox="0 0 16 16"><path d="M1.5,3 V11 M14.5,3 V11 M1.5,6.5 H5" stroke="#880808" stroke-width="1.45" fill="none"/><rect x="1" y="12" width="14" height="3.5" fill="url(#gdim)"/><path d="M5,4 L8,1.5 L15,8 L12,11 Z" fill="#f4b8b0" stroke="#8a5a5a" stroke-width=".5"/><path d="M10,6.5 L13,4.5 L15,8 L12,11 Z" fill="#6a9ae0"/><path d="M12.5,10.5 L15,8" stroke="#e8b020" stroke-width="1.2"/></svg>
<svg class="ic" style="left:895.6px;top:60.2px" width="16" height="16" viewBox="0 0 16 16"><rect x="5" y="1" width="9" height="3.5" fill="#e8e8e8" stroke="#b0b0b0" stroke-width=".8"/><path d="M1.5,4 V11 M14.5,4 V11 M1.5,7.5 H14.5" stroke="#880808" stroke-width="1.45" fill="none"/><rect x="5.5" y="6" width="5" height="3" fill="#e8e8e8" stroke="#8a1010"/><rect x="1" y="12" width="14" height="3.5" fill="url(#gdim)"/></svg>
<svg class="ic" style="left:808.6px;top:82.3px" width="16" height="16" viewBox="0 0 16 16"><path d="M1,1 H15 L5,11 H1 Z" fill="#fff"/><path d="M2,12 L12,1.5 M5.5,13 L15,3" stroke="#880808" stroke-width="1.45" fill="none"/><path d="M3,2 L7,6 M7,6 V3.5 M7,6 H4.5 M14,12.5 L10.5,9 M10.5,9 V11.5 M10.5,9 H13" stroke="#880808" stroke-width="1.45" fill="none"/><rect x="1" y="12.5" width="6" height="3" fill="url(#gdim)"/></svg>
<svg class="ic" style="left:842.6px;top:82.3px" width="16" height="16" viewBox="0 0 16 16"><circle cx="8" cy="8" r="6.3" fill="none" stroke="#143a8c" stroke-width="1.2"/><path d="M5,8 H11 M8,5 V11" stroke="#c01414" stroke-width="1.1"/><path d="M8,1 V3 M8,13 V15 M1,8 H3 M13,8 H15" stroke="#143a8c" stroke-width="1"/></svg>
<svg class="ic" style="left:870.2px;top:82.3px" width="16" height="16" viewBox="0 0 16 16"><path d="M1.5,2 V11 M14.5,2 V11 M1.5,6.5 H14.5" stroke="#880808" stroke-width="1.45" fill="none"/><rect x="5.5" y="2" width="5" height="8" fill="#e8e8e8" stroke="#8a1010" stroke-width="1.2"/><rect x="1" y="12" width="14" height="3.5" fill="url(#gdim)"/></svg>
<svg class="ic" style="left:895.6px;top:82.3px" width="16" height="16" viewBox="0 0 16 16"><rect x="3" y="0.5" width="7" height="6.5" fill="#4a4ac0" stroke="#2a2a80" stroke-width=".6"/><rect x="4.5" y=".8" width="4" height="2.4" fill="#e0e0f0"/><rect x="5" y="4.5" width="3" height="2.5" fill="#c8c8d8"/><path d="M1.5,8 V15.5 M14.5,10 V15.5 M1.5,11.5 H8" stroke="#880808" stroke-width="1.45" fill="none"/><path d="M3,11.5 l2,-1.3 v2.6 z" fill="#8a1010"/><g transform="translate(6.5,5)"><path d="M-.5,9 C.5,6.5 2,6.5 3,4.2 C4,2.6 6,2.4 7.2,3.6 C7.4,6 5.5,8 3.5,8.6 C2,9.1 .8,9.2 -.5,9 Z" fill="#3c68d4"/><path d="M1.5,7.6 C3,7 4.2,5.6 4.6,4" fill="none" stroke="#9cc0f4" stroke-width="1.1"/><path d="M6.4,3.6 L9.3,-.6 L9.9,.2 L7.4,4.4 Z" fill="#e8c030" stroke="#a07810" stroke-width=".3"/></g></svg>
<svg class="ic" style="left:921.7px;top:82.3px" width="16" height="16" viewBox="0 0 16 16"><path d="M1.5,4 V12 M1.5,7.5 H8" stroke="#880808" stroke-width="1.45" fill="none"/><path d="M3,7.5 l2,-1.3 v2.6 z" fill="#8a1010"/><rect x="1" y="12" width="14" height="3.5" fill="url(#gdim)"/><g transform="translate(6.5,1)"><path d="M-.5,9 C.5,6.5 2,6.5 3,4.2 C4,2.6 6,2.4 7.2,3.6 C7.4,6 5.5,8 3.5,8.6 C2,9.1 .8,9.2 -.5,9 Z" fill="#3c68d4"/><path d="M1.5,7.6 C3,7 4.2,5.6 4.6,4" fill="none" stroke="#9cc0f4" stroke-width="1.1"/><path d="M6.4,3.6 L9.3,-.6 L9.9,.2 L7.4,4.4 Z" fill="#e8c030" stroke="#a07810" stroke-width=".3"/></g></svg>
<svg class="ic" style="left:808.6px;top:104.9px" width="16" height="16" viewBox="0 0 16 16"><path d="M2,12 L12,1.5 M5.5,13 L15,3" stroke="#880808" stroke-width="1.45" fill="none"/><path d="M3,2 L7,6 M7,6 V3.5 M7,6 H4.5 M14,12.5 L10.5,9 M10.5,9 V11.5 M10.5,9 H13" stroke="#880808" stroke-width="1.45" fill="none"/><rect x="1" y="12.5" width="6" height="3" fill="url(#gdim)"/></svg>
<svg class="ic" style="left:842.6px;top:104.9px" width="16" height="16" viewBox="0 0 16 16"><path d="M14.5,2 H10 L5,8.5" stroke="#880808" stroke-width="1.45" fill="none"/><path d="M3.8,10 L5.2,6.2 L7.6,8.4 Z" fill="#8a1010"/><rect x="1" y="9" width="4.5" height="6.5" fill="url(#gdim)"/></svg>
<svg class="ic" style="left:870.2px;top:104.9px" width="16" height="16" viewBox="0 0 16 16"><rect x="6.5" y=".8" width="5" height="3" fill="#fff" stroke="#8a1010" stroke-width="1.1"/><path d="M1.5,5 V11.5 M14.5,5 V11.5 M1.5,8 H4 M12,8 H14.5" stroke="#880808" stroke-width="1.45" fill="none"/><rect x="4" y="5.5" width="8" height="5" fill="#e8e8e8" stroke="#c8c8c8" stroke-width=".6"/><rect x="1" y="12" width="14" height="3.5" fill="url(#gdim)"/></svg>
<svg class="ic" style="left:895.6px;top:104.9px" width="16" height="16" viewBox="0 0 16 16"><path d="M1,2 H5 L6,3.2 H10 V4.5 H3.5 L1.5,8 Z" fill="#d8a020"/><path d="M3.5,4.5 H12.5 L10,8.5 H1 Z" fill="#f8d458" stroke="#b88010" stroke-width=".5"/><path d="M1.5,9 V15.5 M14.5,11 V15.5 M1.5,12 H8" stroke="#880808" stroke-width="1.45" fill="none"/><path d="M3,12 l2,-1.3 v2.6 z" fill="#8a1010"/><g transform="translate(6.5,5.5)"><path d="M-.5,9 C.5,6.5 2,6.5 3,4.2 C4,2.6 6,2.4 7.2,3.6 C7.4,6 5.5,8 3.5,8.6 C2,9.1 .8,9.2 -.5,9 Z" fill="#3c68d4"/><path d="M1.5,7.6 C3,7 4.2,5.6 4.6,4" fill="none" stroke="#9cc0f4" stroke-width="1.1"/><path d="M6.4,3.6 L9.3,-.6 L9.9,.2 L7.4,4.4 Z" fill="#e8c030" stroke="#a07810" stroke-width=".3"/></g></svg>
<svg class="ic" style="left:921.7px;top:104.9px" width="16" height="16" viewBox="0 0 16 16"><path d="M1.5,2 V10 M1.5,5.5 H7" stroke="#880808" stroke-width="1.45" fill="none"/><path d="M3,5.5 l2,-1.3 v2.6 z" fill="#8a1010"/><rect x="1" y="12" width="14" height="3.5" fill="url(#gdim)"/><circle cx="10.5" cy="5" r="3.8" fill="url(#glens)" stroke="#7a9ac8" stroke-width=".8"/><path d="M13.2,8 L15.3,10.5" stroke="#e8b030" stroke-width="1.7" stroke-linecap="round"/></svg>
<div class="dd" style="left:831.5px;top:66px"></div>
<div class="combo" style="left:920px;top:57px;width:115px"></div>
<div class="tx" style="left:922.9px;top:59.9px;font-size:12px;color:#1e1e1e;letter-spacing:-0.18px;transform:scaleX(0.9670);">Standard</div>
<div class="dd" style="left:1024.5px;top:65px"></div>
<svg class="ic" style="left:1049.0px;top:60.5px" width="17" height="16" viewBox="0 0 17 16"><path d="M3,2.5 H15 L12.5,6 H.5 Z" fill="#2a5ab0" stroke="#163a80" stroke-width=".5"/><path d="M3,6.5 H15 L12.5,10 H.5 Z" fill="#d83030" stroke="#8a1414" stroke-width=".5"/><path d="M3,10.5 H15 L12.5,14 H.5 Z" fill="#f0e040" stroke="#a89a10" stroke-width=".5"/><circle cx="7.5" cy="7.5" r="3.8" fill="url(#glens)" stroke="#8aa8d0" stroke-width=".8"/><path d="M10.3,10.3 L14,14" stroke="#e8a030" stroke-width="1.8" stroke-linecap="round"/></svg>
<svg class="ic" style="left:1049.0px;top:82.0px" width="17" height="16" viewBox="0 0 17 16"><path d="M3,2.5 H15 L12.5,6 H.5 Z" fill="#2a5ab0" stroke="#163a80" stroke-width=".5"/><path d="M3,6.5 H15 L12.5,10 H.5 Z" fill="#d83030" stroke="#8a1414" stroke-width=".5"/><path d="M3,10.5 H15 L12.5,14 H.5 Z" fill="#f0e040" stroke="#a89a10" stroke-width=".5"/><rect x="7" y="8.5" width="9" height="7" fill="#f4f6ff" stroke="#2a3a9a" stroke-width="1"/><path d="M8.5,11 H14.5 M8.5,13 H14.5" stroke="#2a3a9a" stroke-width=".8"/></svg>
<div class="tx" style="left:1068.5px;top:61.6px;font-size:12px;color:#1e1e1e;letter-spacing:-0.18px;transform:scaleX(0.9761);">Explorare Straturi...</div>
<div class="tx" style="left:1068.5px;top:83.3px;font-size:12px;color:#1e1e1e;letter-spacing:-0.18px;transform:scaleX(0.9667);">Gestionar Stare Strat</div>
<div class="combo w" style="left:1047px;top:101.5px;width:215px;height:19.5px"><div class="abs" style="right:0;top:0;width:16.5px;height:17.5px;background:#ececec"></div></div>
<svg class="ic" style="left:1050.5px;top:103.5px" width="13" height="16" viewBox="0 0 13 16"><path d="M6.5,1 C10.5,1 11.8,4.5 10.5,7.5 C9.5,9.5 9,10 9,11.5 H4 C4,10 3.5,9.5 2.5,7.5 C1.2,4.5 2.5,1 6.5,1 Z" fill="#f8f060" stroke="#8a8420" stroke-width=".8"/><path d="M4.5,3 C3.5,4.5 3.8,6 4.5,7" fill="none" stroke="#fff" stroke-width="1.2"/><rect x="4.3" y="11.5" width="4.4" height="3.2" fill="#6a6a6a"/></svg>
<svg class="ic" style="left:1067.0px;top:103.5px" width="15" height="15" viewBox="0 0 15 15"><path d="M7.5,0 L9,3 L12,1.5 L11.5,4.5 L15,5.5 L12.5,7.5 L15,9.5 L11.5,10.5 L12,13.5 L9,12 L7.5,15 L6,12 L3,13.5 L3.5,10.5 L0,9.5 L2.5,7.5 L0,5.5 L3.5,4.5 L3,1.5 L6,3 Z" fill="#f8f000" stroke="#222" stroke-width=".9"/><circle cx="7.5" cy="7.5" r="3.2" fill="#fffbe0" stroke="#222" stroke-width=".9"/></svg>
<svg class="ic" style="left:1084.5px;top:105.0px" width="13" height="13" viewBox="0 0 13 13"><rect x="5" y="3" width="7.5" height="9.5" fill="#f4f4f4" stroke="#c8c8c8" stroke-width=".8"/><path d="M5,1 V11 M0,6 H10 M1.5,2.5 L8.5,9.5 M8.5,2.5 L1.5,9.5" stroke="#a8a8a8" stroke-width=".9" stroke-dasharray="1 .8"/></svg>
<svg class="ic" style="left:1101.5px;top:103.5px" width="14" height="16" viewBox="0 0 14 16"><path d="M8,7.5 V4 C8,0.5 12.5,0.5 12.5,4 V5.5" fill="none" stroke="#1a2a8a" stroke-width="1.5"/><rect x="1" y="7" width="8.5" height="7.5" fill="#f0c860" stroke="#8a6a10" stroke-width=".8"/><rect x="2" y="8" width="3" height="5.5" fill="#f8e4a0"/></svg>
<div class="abs" style="left:1119px;top:106px;width:12.5px;height:12px;background:#f0003c;border:1px solid #111"></div>
<div class="tx" style="left:1135.0px;top:104.6px;font-size:12.5px;color:#1e1e1e;letter-spacing:-0.18px;transform:scaleX(0.8367);">Polylines</div>
<div class="dd" style="left:1251px;top:109.5px"></div>
<svg class="ic" style="left:1047.5px;top:128.5px" width="9" height="9" viewBox="0 0 9 9"><path d="M1,7 V1 H7" fill="none" stroke="#6a6e74" stroke-width="1.2"/><path d="M3.5,3.5 L7.5,7.5 M7.8,4.5 V7.8 H4.5" fill="none" stroke="#6a6e74" stroke-width="1.2"/></svg>
<svg class="ic" style="left:1286.0px;top:59.0px" width="15" height="16" viewBox="0 0 15 16"><path d="M7.5,8 L7.5,.5 L14,4.2 Z" fill="#f08020"/><path d="M7.5,8 L14,4.2 L14,11.8 Z" fill="#e8e020"/><path d="M7.5,8 L14,11.8 L7.5,15.5 Z" fill="#30c040"/><path d="M7.5,8 L7.5,15.5 L1,11.8 Z" fill="#2080e0"/><path d="M7.5,8 L1,11.8 L1,4.2 Z" fill="#a030d0"/><path d="M7.5,8 L1,4.2 L7.5,.5 Z" fill="#e82040"/></svg>
<svg class="ic" style="left:1285.5px;top:81.0px" width="15" height="12" viewBox="0 0 15 12"><rect x="0" y=".8" width="15" height="1.4" fill="#222"/><rect x="0" y="4.2" width="15" height="2.4" fill="#222"/><rect x="0" y="8.2" width="15" height="3.4" fill="#222"/></svg>
<svg class="ic" style="left:1285.0px;top:99.0px" width="16" height="15" viewBox="0 0 16 15"><path d="M1,1.5 H15" stroke="#222" stroke-width="1.2" stroke-dasharray="1 1"/><path d="M0,5 H16" stroke="#222" stroke-width="1.2"/><path d="M0,8.5 H16" stroke="#222" stroke-width="1.2" stroke-dasharray="4 1.5"/><path d="M0,12 H16" stroke="#222" stroke-width="1.2" stroke-dasharray="2.5 1.2"/></svg>
<div class="combo w" style="left:1304.5px;top:57.5px;width:214.5px;height:19.5px"><div class="abs" style="right:0;top:0;width:13.5px;height:17.5px;background:#ececec"></div></div>
<div class="combo w" style="left:1304.5px;top:78px;width:214.5px;height:19px"><div class="abs" style="right:0;top:0;width:13.5px;height:17px;background:#ececec"></div></div>
<div class="combo w" style="left:1304.5px;top:98px;width:214.5px;height:19px"><div class="abs" style="right:0;top:0;width:13.5px;height:17px;background:#ececec"></div></div>
<div class="abs" style="left:1306.8px;top:61.5px;width:53.5px;height:12.3px;background:#f0003c;border:1px solid #111"></div>
<div class="tx" style="left:1363.0px;top:60.4px;font-size:12.5px;color:#111;letter-spacing:-0.18px;transform:scaleX(0.9004);">PERSTRAT</div>
<div class="abs" style="left:1306.8px;top:85.8px;width:81.5px;height:1.2px;background:#111"></div>
<div class="tx" style="left:1393.0px;top:80.7px;font-size:11.5px;color:#111;letter-spacing:-0.18px;transform:scaleX(0.8264);">PERSTRAT</div>
<div class="abs" style="left:1306.8px;top:106.3px;width:110.5px;height:1.2px;background:#111"></div>
<div class="tx" style="left:1419.0px;top:100.6px;font-size:12.5px;color:#111;letter-spacing:-0.18px;transform:scaleX(0.8910);">PERSTRAT</div>
<div class="dd" style="left:1508.7px;top:65.5px"></div>
<div class="dd" style="left:1508.7px;top:85.5px"></div>
<div class="dd" style="left:1508.7px;top:105.5px"></div>
<svg class="ic" style="left:1529.5px;top:61.0px" width="18" height="14" viewBox="0 0 18 14"><path d="M0,3 H8 M0,6 H6 M0,9 H8" stroke="#222" stroke-width="1.2"/><path d="M0,9 H6" stroke="#30a040" stroke-width="1.4"/><path d="M0,6 H5" stroke="#9a28b0" stroke-width="1.4"/><circle cx="10.5" cy="5.5" r="3.8" fill="url(#glens)" stroke="#7a9ac8" stroke-width=".8"/><path d="M13.3,8.5 L16.5,12" stroke="#e8a830" stroke-width="1.8" stroke-linecap="round"/></svg>
<svg class="ic" style="left:1529.5px;top:82.0px" width="18" height="17" viewBox="0 0 18 17"><path d="M6,13 L10,2 L16,4 L15,14 Z" fill="#e8f4ec" stroke="#146a34" stroke-width="1"/><path d="M10,2 L11,12 L15,14" fill="none" stroke="#146a34" stroke-width=".9"/><circle cx="4.5" cy="12" r="3.6" fill="#2a3ab8" stroke="#0a1470" stroke-width=".6"/><text x="3.4" y="14.4" font-family="Liberation Serif,serif" font-size="6.5" font-weight="bold" fill="#fff">i</text></svg>
<svg class="ic" style="left:-1.0px;top:1.5px" width="34" height="35" viewBox="0 0 34 35"><circle cx="16.7" cy="17.5" r="16.3" fill="url(#gapp)" stroke="#e4e4e4" stroke-width="1.1"/><circle cx="16.7" cy="17.5" r="15.2" fill="none" stroke="#3a3a3a" stroke-width=".7"/><path d="M25.3,9.3 C20.5,3.2 10.5,5 6.8,13 C3.2,21 7,29.2 15,29 C18.5,28.9 21,27.3 22.6,25.6" fill="none" stroke="#fff" stroke-width="4.8"/><path d="M17,19.3 L17.6,15.6 L31.2,14.2 L26.3,28.6 L22.4,19.9 Z" fill="#fff"/></svg>
<svg class="abs" style="left:0;top:0" width="1680" height="1050" viewBox="0 0 1680 1050" shape-rendering="crispEdges"><defs><linearGradient id="colg" x1="0" x2="1" y1="0" y2="0"><stop offset="0" stop-color="#a37d53"/><stop offset="0.5" stop-color="#9a7650"/><stop offset="0.85" stop-color="#7a5a3a"/><stop offset="1" stop-color="#4a3422"/></linearGradient><linearGradient id="stg" gradientUnits="userSpaceOnUse" x1="625" x2="770" y1="0" y2="0"><stop offset="0" stop-color="#93704a"/><stop offset="0.45" stop-color="#8d6a45"/><stop offset="1" stop-color="#6e5036"/></linearGradient><linearGradient id="stg2" gradientUnits="userSpaceOnUse" x1="1178" x2="1238" y1="0" y2="0"><stop offset="0" stop-color="#33251a"/><stop offset="1" stop-color="#1c140d"/></linearGradient></defs>
<polygon points="15.7,603.4 450.0,844.3 1663.4,549.1 1229.1,308.2" fill="#48924a"/>
<polygon points="233.7,723.4 468.6,627.7 554.3,675.7 321.4,771.4" fill="#5a5a5a"/>
<polygon points="321.4,771.4 554.3,675.7 1030.0,561.2 1030.0,599.2 611.4,701.4" fill="#2d2d2d"/>
<polygon points="1298.0,440.0 1444.3,429.1 1531.4,477.7 1298.0,495.7" fill="#474747"/>
<polygon points="1298.0,495.7 1531.4,477.7 1238.6,548.0 1160.0,560.0 1160.0,530.0" fill="#2d2d2d"/>
<polygon points="344.4,381.1 348.1,376.6 351.4,371.9 356.2,374.9 361.3,377.3 363.5,382.5 368.7,384.8 372.4,392.2 378.6,395.9 381.6,401.6 384.8,407.1 388.5,410.8 393.5,412.2 398.5,413.3 403.4,415.0 405.1,421.6 409.6,426.9 414.1,429.4 418.8,431.5 423.2,434.3 425.7,441.7 431.9,447.9 432.6,455.4 427.9,460.2 425.7,466.5 418.2,466.5 420.2,471.2 425.3,472.7 428.1,476.4 429.4,483.8 424.6,488.5 423.2,495.0 427.8,497.7 433.1,497.5 435.3,501.7 440.0,504.0 441.8,508.6 440.5,516.0 434.5,515.0 429.7,520.0 423.6,519.0 418.2,521.0 413.2,520.9 408.4,523.1 403.1,520.2 398.4,523.1 393.3,521.4 388.5,524.0 383.9,522.1 378.9,523.9 374.4,520.4 369.4,522.4 364.7,521.6 359.8,522.5 355.1,521.0 355.1,545.8 348.9,533.4 342.7,518.5" fill="#657036"/>
<polygon points="345.4,381.1 339.0,382.3 334.1,380.9 329.1,379.8 324.2,383.0 320.4,387.2 316.7,394.7 312.5,397.2 309.3,400.9 309.3,405.8 303.7,408.9 300.6,414.5 294.1,414.8 289.4,419.4 287.0,426.9 282.3,428.8 278.3,431.8 273.1,436.1 269.6,441.7 265.8,445.6 265.2,451.1 262.2,455.4 261.0,464.0 265.9,471.5 262.2,476.4 258.2,479.3 254.9,483.2 251.1,486.3 251.5,492.7 253.5,498.7 257.2,503.7 253.2,507.8 252.3,513.6 253.5,521.0 256.4,524.9 259.7,528.4 267.2,525.9 272.7,529.9 279.5,530.9 285.4,530.2 289.4,525.9 294.9,526.8 299.3,523.5 299.5,529.7 304.0,534.7 304.3,540.8 310.7,540.4 316.7,538.3 318.7,533.6 319.2,528.4 324.3,526.4 328.6,522.5 334.0,521.0 340.2,522.0 345.4,518.5" fill="#3f4a26"/>
<polygon points="251.1,486.3 255.6,483.2 258.8,478.6 263.5,475.6 267.2,471.5 272.1,472.6 277.1,471.5 274.1,475.5 273.6,480.6 270.0,484.3 269.7,489.5 267.2,493.7 270.2,499.2 274.6,503.7 268.5,504.1 263.0,507.0 257.2,508.6 256.9,503.9 254.3,499.8 253.8,495.2 251.6,491.0" fill="#657036"/>
<polygon points="345.4,377.3 341.9,383.0 341.5,389.7 338.6,394.4 337.7,399.8 333.6,403.9 333.8,409.8 330.2,414.1 329.1,419.4 325.7,424.0 324.5,429.5 321.6,434.3 318.4,438.9 317.1,444.4 313.8,449.0 311.7,454.1 309.4,459.4 310.3,465.5 306.9,470.6 306.8,476.4 307.1,481.4 310.9,484.9 311.5,489.8 314.2,493.7 310.7,497.1 309.6,501.9 305.6,504.9 304.4,509.7 301.8,513.6 300.3,519.2 301.1,525.2 299.3,530.9 301.3,536.1 304.3,540.8 309.1,541.5 313.3,538.7 317.9,538.3 320.2,533.6 319.2,528.4 324.7,527.0 328.5,522.3 334.0,521.0 339.8,520.1 345.4,518.5" fill="#161b10"/>
<polygon points="344.7,381.1 351.4,371.9 353.8,378.6 346.4,379.8" fill="#161b10"/>
<polygon points="332.8,523.5 339.0,521.0 339.0,610.2 332.8,607.7 336.0,558.1" fill="#657036"/>
<polygon points="339.0,518.5 344.4,518.5 343.9,611.4 338.5,613.1" fill="#161b10"/>
<polygon points="343.9,382.3 347.6,434.3 353.8,498.7 355.1,545.8 351.4,558.1 353.8,607.7 343.9,610.7" fill="#5a6432"/>
<polygon points="1142.0,300.0 1160.0,296.0 1172.0,300.0 1176.0,322.0 1142.0,322.0" fill="#606a34"/>
<polygon points="1242.8,195.7 1238.2,193.0 1232.9,194.5 1228.3,192.2 1223.3,191.9 1219.5,194.7 1215.7,197.6 1210.8,200.9 1208.1,206.2 1203.1,210.0 1200.5,215.7 1194.8,221.4 1189.8,221.5 1185.9,224.6 1181.4,226.2 1178.1,229.5 1174.8,232.9 1171.9,240.5 1165.4,240.5 1159.5,243.3 1158.6,250.0 1153.6,252.2 1153.2,257.9 1150.0,261.4 1153.0,265.5 1156.7,269.0 1158.6,276.7 1164.7,278.0 1170.0,274.8 1165.2,276.7 1163.0,281.8 1158.6,284.3 1156.7,291.9 1159.9,297.6 1165.2,301.4 1168.1,310.0 1143.3,311.9 1143.3,320.5 1211.9,320.5 1242.8,335.7" fill="#606a34"/>
<polygon points="1225.2,219.5 1220.0,222.8 1218.4,229.0 1213.8,232.9 1208.5,236.0 1207.2,242.6 1202.4,246.2 1200.2,250.7 1200.5,255.7 1194.6,257.6 1190.5,262.4 1185.2,265.2 1182.5,269.4 1181.7,274.6 1178.6,278.6 1178.9,284.6 1181.4,290.0 1184.8,294.7 1190.6,295.9 1194.8,299.5 1196.7,303.3 1190.0,302.9 1183.3,303.3 1178.7,305.2 1176.7,310.1 1172.9,312.9 1171.9,320.5 1211.9,320.5 1213.8,265.2 1219.5,246.2 1232.9,204.3" fill="#3a4222"/>
<polygon points="1239.5,196.7 1233.8,202.4 1231.2,207.1 1231.8,212.8 1228.4,217.3 1228.9,222.9 1226.4,227.7 1225.2,232.9 1223.1,237.2 1221.5,241.8 1219.5,246.2 1217.1,250.6 1217.2,255.9 1215.1,260.4 1213.8,265.2 1212.6,270.5 1213.1,275.9 1211.3,281.1 1213.1,286.6 1211.9,291.9 1211.9,320.5 1242.8,336.7 1242.8,196.7" fill="#161b10"/>
<polygon points="1242.0,195.7 1250.0,191.9 1257.6,190.0 1263.3,196.7 1271.0,201.4 1276.7,214.8 1291.9,214.8 1297.6,226.2 1308.1,228.1 1316.7,246.2 1311.9,252.9 1295.7,250.0 1278.6,236.7 1261.4,210.0" fill="#3a4222"/>
<polygon points="1242.0,195.7 1242.0,335.7 1253.8,339.5 1257.8,342.5 1263.2,342.2 1267.1,345.2 1274.8,341.4 1278.6,345.2 1282.6,348.1 1287.9,346.1 1291.9,349.0 1299.5,347.1 1303.5,350.0 1308.6,349.1 1312.9,351.0 1318.3,347.5 1320.5,341.4 1320.9,336.4 1318.6,331.9 1312.9,328.1 1317.9,329.9 1323.0,327.4 1328.1,328.1 1331.3,324.3 1331.5,319.1 1334.8,315.4 1336.7,311.0 1333.8,304.9 1328.1,301.4 1329.7,296.2 1326.2,291.9 1322.3,288.7 1317.3,289.4 1312.9,288.1 1316.2,284.0 1313.9,278.8 1316.0,274.4 1316.0,269.7 1317.6,265.2 1317.4,258.6 1312.9,253.8 1307.8,249.8 1301.1,250.9 1295.7,248.1 1292.5,243.3 1286.4,242.4 1283.4,237.4 1278.6,234.8 1276.9,229.8 1273.4,225.9 1271.6,221.1 1267.2,217.7 1267.8,211.4 1263.3,208.1 1260.2,203.3 1254.7,200.8 1251.9,195.7" fill="#6a7a3c"/>
<polygon points="1242.0,195.7 1246.3,193.9 1250.0,191.0 1257.6,189.0 1258.6,194.3 1263.3,196.7 1271.0,200.5 1271.1,205.7 1275.7,209.0 1276.7,213.8 1281.7,215.9 1286.8,213.3 1291.9,213.8 1292.5,220.7 1297.6,225.2 1302.9,228.7 1309.0,227.1 1310.2,232.5 1314.4,236.3 1315.8,241.6 1318.6,246.2 1315.3,249.7 1312.9,253.8 1307.8,249.9 1301.2,250.7 1295.7,248.1 1293.0,243.8 1288.1,242.4 1283.4,238.5 1278.6,234.8 1277.4,229.5 1273.1,226.1 1271.0,221.4 1270.0,216.1 1264.9,213.1 1263.3,208.1 1260.1,203.7 1255.6,200.6 1251.9,196.7" fill="#3a4222"/>
<polygon points="1312.9,288.1 1317.0,290.3 1322.0,289.9 1326.2,291.9 1326.0,296.9 1328.1,301.4 1332.1,306.5 1336.7,311.0 1332.9,314.4 1333.1,319.9 1329.3,323.3 1328.1,328.1 1323.0,326.2 1317.9,328.6 1312.9,328.1 1307.1,325.2 1301.4,322.4 1305.7,317.0 1309.0,311.0 1309.6,305.4 1305.2,301.1 1305.2,295.7 1309.3,292.2" fill="#5c6933"/>
<polygon points="494.3,400.0 711.0,518.0 711.0,640.0 494.3,520.0" fill="#916d46"/>
<polygon points="494.3,294.0 711.0,411.0 711.0,521.0 494.3,402.9" fill="#95934a"/>
<polygon points="710.0,518.0 1142.9,414.0 1142.9,370.0 1298.0,380.0 1298.0,496.3 710.0,638.8" fill="#543c2a"/>
<polygon points="710.0,409.0 1142.9,303.0 1142.9,417.5 710.0,521.0" fill="#53502a"/>
<polygon points="519.4,333.4 547.4,348.9 547.4,397.9 519.4,382.4" fill="#6fe6e6" stroke="#1a0f0f" stroke-width="1.8"/>
<polyline points="533.4,341.2 533.4,390.2" fill="none" stroke="#1a0f0f" stroke-width="1"/>
<polyline points="519.4,345.6 547.4,361.2" fill="none" stroke="#1a0f0f" stroke-width="0.8"/>
<polyline points="519.4,357.9 547.4,373.4" fill="none" stroke="#1a0f0f" stroke-width="0.8"/>
<polyline points="519.4,370.1 547.4,385.7" fill="none" stroke="#1a0f0f" stroke-width="0.8"/>
<polygon points="598.6,383.7 609.4,389.7 609.4,408.3 598.6,402.3" fill="#6fe6e6" stroke="#1a0f0f" stroke-width="1.8"/>
<polygon points="519.4,453.0 547.4,468.5 547.4,517.5 519.4,502.0" fill="#6fe6e6" stroke="#1a0f0f" stroke-width="1.8"/>
<polyline points="533.4,460.8 533.4,509.8" fill="none" stroke="#1a0f0f" stroke-width="1"/>
<polyline points="519.4,465.2 547.4,480.8" fill="none" stroke="#1a0f0f" stroke-width="0.8"/>
<polyline points="519.4,477.5 547.4,493.0" fill="none" stroke="#1a0f0f" stroke-width="0.8"/>
<polyline points="519.4,489.8 547.4,505.3" fill="none" stroke="#1a0f0f" stroke-width="0.8"/>
<polygon points="468.2,520.0 554.9,566.3 554.9,677.4 468.2,627.7" fill="#916d46"/>
<polygon points="554.9,566.3 718.6,525.7 718.6,636.8 554.9,677.4" fill="#543c2a"/>
<polygon points="482.3,530.4 540.6,562.6 540.6,665.6 482.3,632.4" fill="#231411"/>
<polygon points="483.6,532.1 496.2,539.0 496.2,550.7 483.6,543.8" fill="#6fe6e6"/>
<polygon points="497.8,539.9 510.4,546.8 510.4,558.5 497.8,551.6" fill="#6fe6e6"/>
<polygon points="512.0,547.7 524.6,554.6 524.6,566.3 512.0,559.4" fill="#6fe6e6"/>
<polygon points="526.2,555.5 538.8,562.4 538.8,574.1 526.2,567.2" fill="#6fe6e6"/>
<polygon points="551.0,567.2 640.0,500.0 718.6,474.0 718.6,525.7" fill="#2c0000"/>
<polygon points="444.3,508.6 612.3,418.6 718.6,476.6 551.0,567.2" fill="#560000"/>
<polygon points="835.5,409.8 867.4,402.1 867.4,446.8 835.5,454.5" fill="#3d7d7d" stroke="#1a0f0f" stroke-width="2.4"/>
<polyline points="851.5,405.9 851.5,450.6" fill="none" stroke="#1a0f0f" stroke-width="1.5"/>
<polyline points="835.5,432.2 867.4,424.4" fill="none" stroke="#1a0f0f" stroke-width="1.5"/>
<polygon points="985.5,373.2 1017.4,365.5 1017.4,411.1 985.5,418.8" fill="#3d7d7d" stroke="#1a0f0f" stroke-width="2.4"/>
<polyline points="1001.5,369.3 1001.5,414.9" fill="none" stroke="#1a0f0f" stroke-width="1.5"/>
<polyline points="985.5,396.0 1017.4,388.3" fill="none" stroke="#1a0f0f" stroke-width="1.5"/>
<polygon points="985.5,492.6 1017.4,484.9 1017.4,530.5 985.5,538.2" fill="#3d7d7d" stroke="#1a0f0f" stroke-width="2.4"/>
<polyline points="1001.5,488.7 1001.5,534.3" fill="none" stroke="#1a0f0f" stroke-width="1.5"/>
<polyline points="985.5,515.4 1017.4,507.7" fill="none" stroke="#1a0f0f" stroke-width="1.5"/>
<polygon points="835.8,528.4 867.4,520.7 867.4,567.3 835.8,575.0" fill="#3d7d7d" stroke="#1a0f0f" stroke-width="2.4"/>
<polyline points="851.6,524.6 851.6,571.2" fill="none" stroke="#1a0f0f" stroke-width="1.5"/>
<polyline points="835.8,551.7 867.4,544.0" fill="none" stroke="#1a0f0f" stroke-width="1.5"/>
<polygon points="744.6,442.6 768.7,436.8 768.7,480.4 744.6,486.2" fill="#3d7d7d" stroke="#1a0f0f" stroke-width="2.4"/>
<polyline points="756.6,439.7 756.6,483.3" fill="none" stroke="#1a0f0f" stroke-width="1.5"/>
<polygon points="771.1,436.2 792.2,431.1 792.2,494.7 771.1,499.8" fill="#3d7d7d" stroke="#1a0f0f" stroke-width="2.4"/>
<polyline points="771.1,468.0 792.2,462.9" fill="none" stroke="#1a0f0f" stroke-width="1.5"/>
<polygon points="1060.6,365.5 1081.7,360.4 1081.7,425.0 1060.6,430.1" fill="#3d7d7d" stroke="#1a0f0f" stroke-width="2.4"/>
<polyline points="1060.6,397.8 1081.7,392.7" fill="none" stroke="#1a0f0f" stroke-width="1.5"/>
<polygon points="1084.1,359.8 1109.7,353.6 1109.7,399.7 1084.1,405.9" fill="#3d7d7d" stroke="#1a0f0f" stroke-width="2.4"/>
<polyline points="1096.9,356.7 1096.9,402.8" fill="none" stroke="#1a0f0f" stroke-width="1.5"/>
<polygon points="742.8,563.4 794.6,550.6 794.6,615.2 742.8,628.0" fill="#231411"/>
<polygon points="744.2,563.9 766.2,558.5 766.2,621.6 744.2,627.0" fill="#028686" stroke="#1a0f0f" stroke-width="0.9"/>
<polyline points="755.2,561.2 755.2,624.3" fill="none" stroke="#1a0f0f" stroke-width="1.0"/>
<polyline points="744.2,574.4 766.2,569.0" fill="none" stroke="#1a0f0f" stroke-width="1.0"/>
<polyline points="744.2,584.9 766.2,579.5" fill="none" stroke="#1a0f0f" stroke-width="1.0"/>
<polyline points="744.2,595.4 766.2,590.1" fill="none" stroke="#1a0f0f" stroke-width="1.0"/>
<polyline points="744.2,605.9 766.2,600.6" fill="none" stroke="#1a0f0f" stroke-width="1.0"/>
<polyline points="744.2,616.4 766.2,611.1" fill="none" stroke="#1a0f0f" stroke-width="1.0"/>
<polygon points="772.2,557.6 793.6,552.4 793.6,615.0 772.2,620.2" fill="#028686" stroke="#1a0f0f" stroke-width="0.9"/>
<polyline points="782.9,555.0 782.9,617.6" fill="none" stroke="#1a0f0f" stroke-width="1.0"/>
<polyline points="772.2,568.0 793.6,562.8" fill="none" stroke="#1a0f0f" stroke-width="1.0"/>
<polyline points="772.2,578.4 793.6,573.2" fill="none" stroke="#1a0f0f" stroke-width="1.0"/>
<polyline points="772.2,588.9 793.6,583.7" fill="none" stroke="#1a0f0f" stroke-width="1.0"/>
<polyline points="772.2,599.3 793.6,594.1" fill="none" stroke="#1a0f0f" stroke-width="1.0"/>
<polyline points="772.2,609.7 793.6,604.5" fill="none" stroke="#1a0f0f" stroke-width="1.0"/>
<polygon points="1059.0,487.0 1111.5,474.0 1111.5,538.0 1059.0,551.0" fill="#231411"/>
<polygon points="1060.5,487.4 1082.5,482.1 1082.5,545.2 1060.5,550.5" fill="#028686" stroke="#1a0f0f" stroke-width="0.9"/>
<polyline points="1071.5,484.8 1071.5,547.9" fill="none" stroke="#1a0f0f" stroke-width="1.0"/>
<polyline points="1060.5,498.0 1082.5,492.6" fill="none" stroke="#1a0f0f" stroke-width="1.0"/>
<polyline points="1060.5,508.5 1082.5,503.1" fill="none" stroke="#1a0f0f" stroke-width="1.0"/>
<polyline points="1060.5,519.0 1082.5,513.7" fill="none" stroke="#1a0f0f" stroke-width="1.0"/>
<polyline points="1060.5,529.5 1082.5,524.2" fill="none" stroke="#1a0f0f" stroke-width="1.0"/>
<polyline points="1060.5,540.0 1082.5,534.7" fill="none" stroke="#1a0f0f" stroke-width="1.0"/>
<polygon points="1088.5,480.6 1110.5,475.3 1110.5,537.9 1088.5,543.2" fill="#028686" stroke="#1a0f0f" stroke-width="0.9"/>
<polyline points="1099.5,478.0 1099.5,540.6" fill="none" stroke="#1a0f0f" stroke-width="1.0"/>
<polyline points="1088.5,491.1 1110.5,485.7" fill="none" stroke="#1a0f0f" stroke-width="1.0"/>
<polyline points="1088.5,501.5 1110.5,496.2" fill="none" stroke="#1a0f0f" stroke-width="1.0"/>
<polyline points="1088.5,511.9 1110.5,506.6" fill="none" stroke="#1a0f0f" stroke-width="1.0"/>
<polyline points="1088.5,522.4 1110.5,517.0" fill="none" stroke="#1a0f0f" stroke-width="1.0"/>
<polyline points="1088.5,532.8 1110.5,527.5" fill="none" stroke="#1a0f0f" stroke-width="1.0"/>
<polygon points="470.0,283.4 790.0,192.9 845.7,225.1 704.3,413.7" fill="#560000"/>
<polygon points="704.3,413.7 845.7,225.1 1167.1,300.6" fill="#4a0000"/>
<polygon points="790.0,192.9 931.4,170.0 1167.1,300.6 845.7,225.1" fill="#330000"/>
<polyline points="470.0,283.9 704.6,414.2 1167.1,301.1" fill="none" stroke="#1c0000" stroke-width="1.2"/>
<polygon points="1142.9,318.6 1212.9,320.6 1320.6,379.4 1153.2,372.0 1153.2,421.0 1142.9,424.0" fill="#380000"/>
<polygon points="1142.9,366.6 1153.2,372.0 1153.2,421.0 1142.9,424.0" fill="#470000"/>
<polygon points="1153.2,372.0 1320.6,379.4 1298.0,385.2 1153.2,421.0" fill="#2c0000"/>
<path d="M642.0,655.3 L642.0,657.1 L642.0,665.6 L633.9,667.9 L633.9,676.4 L625.0,679.5 L625.0,688.0 L617.0,690.2 L617.0,698.7 Q691.9,716.4 783.0,708.5 L885.7,684.4 L885.7,675.9 L879.5,672.4 L879.5,662.5 L873.2,659.0 L873.2,650.9 L867.9,647.4 L867.9,638.4 L849.0,629.1 L849.0,605.1 Z" fill="#916d46"/>
<path d="M642.0,657.1 Q697.6,669.5 765.2,662.9 L765.2,670.9 Q697.6,677.5 642.0,665.1 Z" fill="url(#stg)"/>
<polygon points="765.2,662.9 867.9,638.4 867.9,646.4 765.2,670.9" fill="#543c2a"/>
<path d="M633.9,667.9 Q696.0,682.0 771.4,675.0 L771.4,683.0 Q696.0,690.0 633.9,675.9 Z" fill="url(#stg)"/>
<polygon points="771.4,675.0 873.2,650.9 873.2,658.9 771.4,683.0" fill="#543c2a"/>
<path d="M625.0,679.5 Q693.5,695.2 776.8,687.5 L776.8,695.5 Q693.5,703.2 625.0,687.5 Z" fill="url(#stg)"/>
<polygon points="776.8,687.5 879.5,662.5 879.5,670.5 776.8,695.5" fill="#543c2a"/>
<path d="M617.0,690.2 Q691.9,707.9 783.0,700.0 L783.0,708.0 Q691.9,715.9 617.0,698.2 Z" fill="url(#stg)"/>
<polygon points="783.0,700.0 885.7,675.9 885.7,683.9 783.0,708.0" fill="#543c2a"/>
<rect x="750.0" y="535.4" width="9.6" height="58.9" fill="url(#colg)"/>
<polygon points="745.4,592.0 752.3,595.0 752.3,655.5 745.4,648.5" fill="#916d46"/>
<polygon points="752.3,595.0 763.7,592.0 763.7,651.5 752.3,655.5" fill="#543c2a"/>
<rect x="833.6" y="510.0" width="9.6" height="62.9" fill="url(#colg)"/>
<polygon points="828.9,571.0 836.9,574.0 836.9,634.0 828.9,627.0" fill="#916d46"/>
<polygon points="836.9,574.0 848.9,571.0 848.9,630.0 836.9,634.0" fill="#543c2a"/>
<polygon points="718.6,514.9 746.9,532.6 849.7,504.6 822.0,489.0" fill="#95934a"/>
<polygon points="746.9,532.6 849.7,504.6 849.7,508.6 746.9,536.6" fill="#53502a"/>
<polygon points="745.2,530.5 754.3,535.2 754.3,539.1 750.0,537.6 745.2,534.3" fill="#a27c52"/>
<polyline points="840.0,472.1 813.0,458.2" fill="none" stroke="#0c0c0c" stroke-width="1.2"/>
<polyline points="840.0,486.9 813.0,473.0" fill="none" stroke="#0c0c0c" stroke-width="1.1"/>
<polyline points="830.5,503.0 830.5,467.2" fill="none" stroke="#0c0c0c" stroke-width="1.4"/>
<polyline points="821.1,498.2 821.1,462.4" fill="none" stroke="#0c0c0c" stroke-width="1.4"/>
<polyline points="750.9,493.3 723.9,479.4" fill="none" stroke="#0c0c0c" stroke-width="1.2"/>
<polyline points="750.9,508.1 723.9,494.2" fill="none" stroke="#0c0c0c" stroke-width="1.1"/>
<polyline points="741.4,524.2 741.4,488.4" fill="none" stroke="#0c0c0c" stroke-width="1.4"/>
<polyline points="732.0,519.4 732.0,483.6" fill="none" stroke="#0c0c0c" stroke-width="1.4"/>
<polyline points="750.9,493.3 840.0,472.1" fill="none" stroke="#0c0c0c" stroke-width="1.2"/>
<polyline points="750.9,508.1 840.0,486.9" fill="none" stroke="#0c0c0c" stroke-width="1.1"/>
<polyline points="750.9,529.1 750.9,493.3" fill="none" stroke="#0c0c0c" stroke-width="1.5"/>
<polyline points="765.8,525.6 765.8,489.8" fill="none" stroke="#0c0c0c" stroke-width="1.5"/>
<polyline points="780.6,522.0 780.6,486.2" fill="none" stroke="#0c0c0c" stroke-width="1.5"/>
<polyline points="795.5,518.5 795.5,482.7" fill="none" stroke="#0c0c0c" stroke-width="1.5"/>
<polyline points="810.3,515.0 810.3,479.2" fill="none" stroke="#0c0c0c" stroke-width="1.5"/>
<polyline points="825.1,511.4 825.1,475.6" fill="none" stroke="#0c0c0c" stroke-width="1.5"/>
<polyline points="840.0,507.9 840.0,472.1" fill="none" stroke="#0c0c0c" stroke-width="1.5"/>
<polyline points="817.5,581.4 817.5,616.8" fill="none" stroke="#0c0c0c" stroke-width="1.3"/>
<polyline points="817.5,582.5 829.0,587.9" fill="none" stroke="#0c0c0c" stroke-width="1"/>
<polyline points="817.5,599.6 829.0,605.0" fill="none" stroke="#0c0c0c" stroke-width="1"/>
<polyline points="860.0,605.0 860.0,633.0" fill="none" stroke="#0c0c0c" stroke-width="1.4"/>
<polyline points="870.0,637.0 870.0,664.0" fill="none" stroke="#0c0c0c" stroke-width="1.4"/>
<polyline points="883.0,655.0 883.0,688.0" fill="none" stroke="#0c0c0c" stroke-width="1.4"/>
<polyline points="845.0,597.0 860.0,604.0 883.0,655.0" fill="none" stroke="#0c0c0c" stroke-width="1.1"/>
<polyline points="845.0,612.0 860.0,619.0 883.0,672.0" fill="none" stroke="#0c0c0c" stroke-width="1.0"/>
<path d="M1030.0,560.0 L1030.0,600.0 L1092.9,633.6 L1196.4,608.1 C1222.9,592.9 1235.7,577.1 1238.6,562.9 L1237.9,547.1 L1229.3,545.7 L1229.3,538.6 L1220.0,538.6 L1220.0,530.7 L1211.4,530.7 L1211.4,516.4 Z" fill="#916d46"/>
<polygon points="1212.1,605.4 1225.7,598.6 1238.6,583.6 1238.9,585.7 1227.1,600.7 1213.6,606.9" fill="#916d46"/>
<polygon points="1240.3,549.3 1245.0,550.0 1247.1,556.0 1244.3,552.9" fill="#916d46"/>
<polygon points="1094.3,634.3 1105.7,635.0 1144.3,625.7 1105.7,636.4 1097.9,637.4" fill="#916d46"/>
<polygon points="1075.0,587.4 1177.9,562.9 1177.9,571.2 1075.0,595.7" fill="#543c2a"/>
<polygon points="1081.4,600.0 1184.3,575.4 1184.3,583.7 1081.4,608.3" fill="#543c2a"/>
<polygon points="1087.1,612.1 1190.0,587.6 1190.0,595.9 1087.1,620.4" fill="#543c2a"/>
<polygon points="1092.9,624.3 1196.4,599.6 1196.4,607.9 1092.9,632.6" fill="#543c2a"/>
<path d="M1177.9,562.9 C1195.7,554.3 1207.1,542.9 1211.4,530.7 L1211.4,537.4 C1208.9,550.0 1197.1,561.7 1177.9,571.1 Z" fill="url(#stg2)"/>
<path d="M1184.3,575.4 C1204.3,565.0 1217.1,551.4 1220.0,538.6 L1220.7,546.0 C1218.6,560.0 1205.7,572.1 1184.3,583.7 Z" fill="url(#stg2)"/>
<path d="M1190.0,587.6 C1212.9,575.0 1225.7,560.7 1229.3,545.7 L1229.7,554.0 C1227.1,569.3 1214.3,582.9 1190.0,595.9 Z" fill="url(#stg2)"/>
<path d="M1196.4,599.6 C1220.0,586.4 1234.3,570.7 1237.9,555.0 L1238.6,562.9 C1235.7,577.9 1222.9,593.6 1196.4,608.1 Z" fill="url(#stg2)"/>
<rect x="1058.6" y="460.0" width="10.0" height="58.6" fill="url(#colg)"/>
<polygon points="1054.3,516.5 1062.3,519.5 1062.3,579.0 1054.3,572.0" fill="#916d46"/>
<polygon points="1062.3,519.5 1073.4,516.5 1073.4,575.0 1062.3,579.0" fill="#543c2a"/>
<rect x="1145.7" y="439.4" width="8.6" height="57.7" fill="url(#colg)"/>
<polygon points="1140.0,495.5 1147.9,498.5 1147.9,558.0 1140.0,551.0" fill="#916d46"/>
<polygon points="1147.9,498.5 1160.0,495.5 1160.0,554.0 1147.9,558.0" fill="#543c2a"/>
<polygon points="1033.1,440.3 1063.4,458.0 1165.7,428.9 1138.0,413.0" fill="#95934a"/>
<polygon points="1063.4,458.0 1165.7,428.9 1165.7,432.9 1063.4,462.0" fill="#53502a"/>
<polygon points="1053.8,455.3 1062.9,460.0 1062.9,463.9 1058.6,462.4 1053.8,459.1" fill="#a27c52"/>
<polygon points="1143.3,439.0 1148.6,439.3 1148.6,442.5 1145.7,441.5" fill="#a27c52"/>
<polyline points="1156.6,394.1 1129.6,380.2" fill="none" stroke="#0c0c0c" stroke-width="1.2"/>
<polyline points="1156.6,408.9 1129.6,395.0" fill="none" stroke="#0c0c0c" stroke-width="1.1"/>
<polyline points="1147.1,425.0 1147.1,389.2" fill="none" stroke="#0c0c0c" stroke-width="1.4"/>
<polyline points="1137.7,420.2 1137.7,384.4" fill="none" stroke="#0c0c0c" stroke-width="1.4"/>
<polyline points="1068.0,416.4 1041.0,402.5" fill="none" stroke="#0c0c0c" stroke-width="1.2"/>
<polyline points="1068.0,431.2 1041.0,417.3" fill="none" stroke="#0c0c0c" stroke-width="1.1"/>
<polyline points="1058.5,447.3 1058.5,411.5" fill="none" stroke="#0c0c0c" stroke-width="1.4"/>
<polyline points="1049.1,442.5 1049.1,406.7" fill="none" stroke="#0c0c0c" stroke-width="1.4"/>
<polyline points="1068.0,416.4 1156.6,394.1" fill="none" stroke="#0c0c0c" stroke-width="1.2"/>
<polyline points="1068.0,431.2 1156.6,408.9" fill="none" stroke="#0c0c0c" stroke-width="1.1"/>
<polyline points="1068.0,452.2 1068.0,416.4" fill="none" stroke="#0c0c0c" stroke-width="1.5"/>
<polyline points="1082.8,448.5 1082.8,412.7" fill="none" stroke="#0c0c0c" stroke-width="1.5"/>
<polyline points="1097.5,444.8 1097.5,409.0" fill="none" stroke="#0c0c0c" stroke-width="1.5"/>
<polyline points="1112.3,441.0 1112.3,405.2" fill="none" stroke="#0c0c0c" stroke-width="1.5"/>
<polyline points="1127.1,437.3 1127.1,401.5" fill="none" stroke="#0c0c0c" stroke-width="1.5"/>
<polyline points="1141.8,433.6 1141.8,397.8" fill="none" stroke="#0c0c0c" stroke-width="1.5"/>
<polyline points="1156.6,429.9 1156.6,394.1" fill="none" stroke="#0c0c0c" stroke-width="1.5"/>
<polyline points="1040.0,527.1 1040.0,562.9" fill="none" stroke="#0c0c0c" stroke-width="1.3"/>
<polyline points="1040.0,528.6 1053.6,535.7" fill="none" stroke="#0c0c0c" stroke-width="1"/>
<polyline points="1040.0,545.0 1053.6,551.4" fill="none" stroke="#0c0c0c" stroke-width="1"/>
<polyline points="1080.7,550.0 1080.7,584.3" fill="none" stroke="#0c0c0c" stroke-width="1.4"/>
<polyline points="1092.9,579.3 1092.9,609.3" fill="none" stroke="#0c0c0c" stroke-width="1.4"/>
<polyline points="1104.0,600.0 1104.0,634.3" fill="none" stroke="#0c0c0c" stroke-width="1.5"/>
<polyline points="1065.7,543.6 1080.7,550.3 1104.0,600.7" fill="none" stroke="#0c0c0c" stroke-width="1.1"/>
<polyline points="1065.7,557.1 1080.7,565.0 1104.0,614.3" fill="none" stroke="#0c0c0c" stroke-width="1.0"/>
<polygon points="468.6,803.5 472.2,798.2 506.0,817.0 503.0,824.5" fill="#109a10"/>
<polygon points="469.3,802.3 472.2,798.2 506.0,817.0 504.6,820.5" fill="#22d422"/>
<polygon points="470.6,800.6 471.7,799.2 505.0,817.6 504.2,819.0" fill="#9af29a"/>
<polygon points="505.0,815.5 553.5,805.0 556.5,811.5 507.0,824.0" fill="#a01010"/>
<polygon points="505.0,815.5 553.5,805.0 555.0,808.6 506.0,820.0" fill="#e02020"/>
<polygon points="505.5,816.6 554.0,806.3 554.5,807.6 506.0,818.2" fill="#f08080"/>
<rect x="501.2" y="765" width="7.8" height="58.5" rx="2.2" fill="#0808c8"/>
<rect x="502.6" y="766" width="2.2" height="56.5" fill="#3c3cf4"/>
<text x="497.5" y="753.8" font-family="Liberation Sans, sans-serif" font-size="19.5" fill="#1414d8">Z</text>
<text x="453.5" y="804.2" font-family="Liberation Sans, sans-serif" font-size="17" fill="#14c814">Y</text>
<text x="566.5" y="812.8" font-family="Liberation Sans, sans-serif" font-size="17" fill="#d82020">X</text></svg>
<div id="laytabs" class="abs"></div>
<div class="abs" style="left:0;top:871px;width:62.5px;height:15px;border-bottom:1.5px solid #6e6e6e"></div>
<div class="abs" style="left:0.0px;top:871px;width:15.6px;height:15px;border-right:1px solid #b4b4b4;border-left:1px solid #fff"></div>
<svg class="ic" style="left:0.5px;top:871.5px" width="15" height="14" viewBox="0 0 15 14"><path d="M3.5,2.5 V11.5" stroke="#111" stroke-width="1.5"/><path d="M10.5,2.5 L5,7 L10.5,11.5 Z" fill="#111"/></svg>
<div class="abs" style="left:15.6px;top:871px;width:15.6px;height:15px;border-right:1px solid #b4b4b4;border-left:1px solid #fff"></div>
<svg class="ic" style="left:16.1px;top:871.5px" width="15" height="14" viewBox="0 0 15 14"><path d="M10,2.5 L4.5,7 L10,11.5 Z" fill="#111"/></svg>
<div class="abs" style="left:31.2px;top:871px;width:15.6px;height:15px;border-right:1px solid #b4b4b4;border-left:1px solid #fff"></div>
<svg class="ic" style="left:31.7px;top:871.5px" width="15" height="14" viewBox="0 0 15 14"><path d="M5,2.5 L10.5,7 L5,11.5 Z" fill="#111"/></svg>
<div class="abs" style="left:46.8px;top:871px;width:15.6px;height:15px;border-right:1px solid #b4b4b4;border-left:1px solid #fff"></div>
<svg class="ic" style="left:47.3px;top:871.5px" width="15" height="14" viewBox="0 0 15 14"><path d="M11,2.5 V11.5" stroke="#111" stroke-width="1.5"/><path d="M4,2.5 L9.5,7 L4,11.5 Z" fill="#111"/></svg>
<svg class="ic" style="left:62.0px;top:870.0px" width="180" height="18" viewBox="0 0 180 18"><path d="M2,1 L9,15.5 H50 L57,2" fill="#fff" stroke="none"/><path d="M2,1 L9.5,16" stroke="#111" stroke-width="1.1" fill="none"/><path d="M50,16.5 L57,2 M53.5,9 L58,16" stroke="#111" stroke-width="1" fill="none"/><path d="M58,16 H108" stroke="#6e6e6e" stroke-width="1"/><path d="M108,16.5 L112,7 L117,16.5 M112,7 L109.5,2" stroke="#111" stroke-width="1" fill="none"/><path d="M117,16 H167" stroke="#6e6e6e" stroke-width="1"/><path d="M167,16.5 L174,2" stroke="#111" stroke-width="1.1" fill="none"/></svg>
<div class="tx" style="left:75.8px;top:871.3px;font-size:12px;color:#111;letter-spacing:-0.18px;transform:scaleX(0.9538);font-weight:bold;">Model</div>
<div class="tx" style="left:126.0px;top:871.6px;font-size:11.5px;color:#111;letter-spacing:-0.18px;transform:scaleX(0.9405);">Layout1</div>
<div class="tx" style="left:185.0px;top:871.6px;font-size:11.5px;color:#111;letter-spacing:-0.18px;transform:scaleX(0.9556);">Layout2</div>
<div class="abs" style="left:1676px;top:864px;width:4px;height:5px;border-left:1.5px solid #0a4a2a;border-bottom:1.5px solid #0a4a2a"></div>
<div id="darkline" class="abs"></div>
<div id="cmdtitle" class="abs"></div>
<div class="tx" style="left:4.3px;top:894.5px;font-size:12px;color:#454545;letter-spacing:-0.18px;transform:scaleX(0.9532);">Advance CAD Linie de comandă</div>
<svg class="ic" style="left:1648.0px;top:895.0px" width="10" height="12" viewBox="0 0 10 12"><path d="M3,1.5 H7.5 V6.5 M3,1.5 V6.5 M1.5,6.8 H9 M5.2,7 V11" fill="none" stroke="#222" stroke-width="1.1"/><path d="M6.3,1.5 V6.5" stroke="#222" stroke-width="1.4"/></svg>
<svg class="ic" style="left:1665.0px;top:896.0px" width="10" height="10" viewBox="0 0 10 10"><path d="M1,1 L9,9 M9,1 L1,9" stroke="#222" stroke-width="1.3"/></svg>
<div id="cmdhist" class="abs"><div class="abs" style="left:2px;top:19.5px">Comanda:</div><div class="abs" style="left:2px;top:36px">Renunţă</div></div>
<div class="abs" style="left:1662px;top:913px;width:18px;height:55.5px;background:#fdfdfd"></div>
<svg class="ic" style="left:1666.0px;top:918.0px" width="10" height="6" viewBox="0 0 10 6"><path d="M1.5,5 L5,1.5 L8.5,5 Z" fill="#8a8a8a"/></svg>
<svg class="ic" style="left:1666.0px;top:957.5px" width="10" height="6" viewBox="0 0 10 6"><path d="M1.5,1 L5,4.5 L8.5,1 Z" fill="#8a8a8a"/></svg>
<div id="cmdline" class="abs"><div class="abs" style="left:4px;top:3px">Comanda:</div></div>
<div id="cmdgap" class="abs"></div>
<div id="status" class="abs">
<div class="sep" style="left:1021px"></div>
<div class="sep" style="left:1227.5px"></div>
<div class="sep" style="left:1286.5px"></div>
<div class="sep" style="left:1387px"></div>
<div class="sep" style="left:1429px"></div>
<div class="sep" style="left:1473px"></div>
<div class="sep" style="left:1524px"></div>
<div class="sep" style="left:1596.5px"></div>
<div class="sep" style="left:1625px"></div>
</div>
<div class="tx" style="left:4.6px;top:995.4px;font-size:12px;color:#fff;letter-spacing:-0.18px;transform:scaleX(0.9212);">Gata</div>
<div class="tx" style="left:1025.0px;top:995.7px;font-size:11.6px;color:#fff;letter-spacing:-0.18px;transform:scaleX(0.9605);">25.757,-21.3497,0</div>
<div class="tx" style="left:1231.5px;top:995.7px;font-size:11.6px;color:#fff;letter-spacing:-0.18px;transform:scaleX(0.8676);">OTRACK</div>
<div class="tx" style="left:1291.0px;top:995.7px;font-size:11.6px;color:#8a8a8a;letter-spacing:-0.18px;transform:scaleX(0.9021);">INSTANTANEU</div>
<div class="tx" style="left:1391.5px;top:995.7px;font-size:11.6px;color:#8a8a8a;letter-spacing:-0.18px;transform:scaleX(0.8699);">GRILĂ</div>
<div class="tx" style="left:1433.5px;top:995.7px;font-size:11.6px;color:#fff;letter-spacing:-0.18px;transform:scaleX(0.8960);">ORTO</div>
<div class="tx" style="left:1477.0px;top:995.7px;font-size:11.6px;color:#8a8a8a;letter-spacing:-0.18px;transform:scaleX(0.8848);">POLAR</div>
<div class="tx" style="left:1528.5px;top:995.7px;font-size:11.6px;color:#fff;letter-spacing:-0.18px;transform:scaleX(0.8963);">OINSTANT</div>
<div class="tx" style="left:1601.5px;top:995.7px;font-size:11.6px;color:#8a8a8a;letter-spacing:-0.18px;transform:scaleX(0.8813);">GLI</div>
<div class="tx" style="left:1629.5px;top:995.7px;font-size:11.6px;color:#fff;letter-spacing:-0.18px;transform:scaleX(0.9170);">MODEL</div>
<div id="below" class="abs"></div>
</body></html>
